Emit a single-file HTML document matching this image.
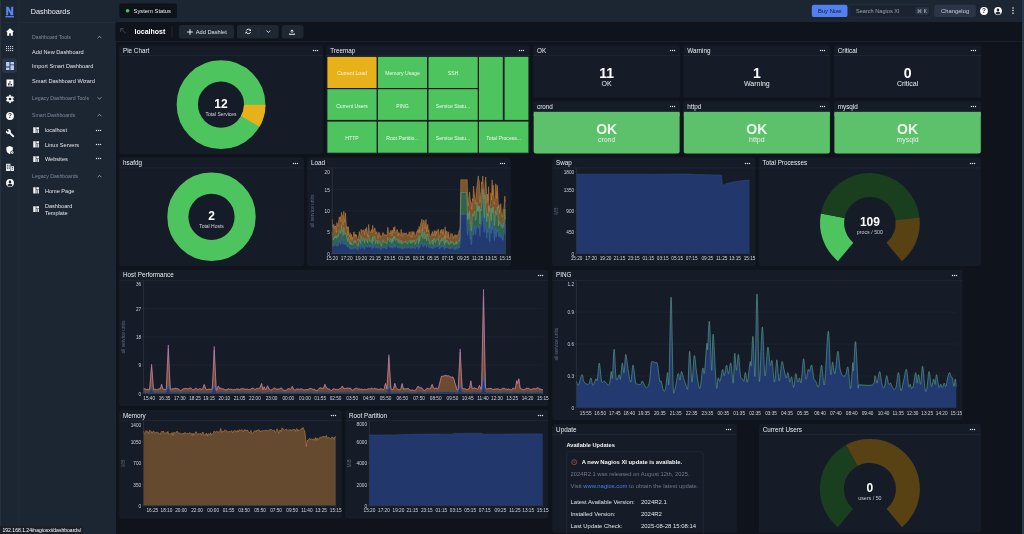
<!DOCTYPE html>
<html lang="en"><head><meta charset="utf-8"><title>Dashboards - Nagios XI</title>
<style>
*{box-sizing:border-box;margin:0;padding:0}
html,body{width:1024px;height:534px;overflow:hidden;background:#0f131b}
body{position:relative;font-family:"Liberation Sans",Arial,sans-serif;color:#e4e7ec;font-size:5.6px;line-height:1}
#app{position:absolute;left:0;top:0;width:1024px;height:534px;will-change:transform}
.abs{position:absolute;display:block}
.tx{position:absolute;display:block;white-space:nowrap;line-height:1}
.panel{position:absolute;overflow:hidden}
.ph{position:absolute;left:0;right:0;top:0;height:11px}
#bg{z-index:0}
svg text{font-family:"Liberation Sans",Arial,sans-serif}
.tk{font-size:4.7px;fill:#cfd4dc}
.ax{font-size:4.8px;fill:#5f6a7c}
</style></head><body><div id="app"><svg id="bg" class="abs" style="left:0;top:0" width="1024" height="534" viewBox="0 0 1024 534"><rect x="0" y="0" width="115.6" height="534" fill="#1c2532"/><rect x="0" y="0" width="1" height="534" fill="#2a313d"/><rect x="18.5" y="0" width="1.1" height="534" fill="#232c3a"/><rect x="114.6" y="0" width="1" height="534" fill="#212a38"/><rect x="115.6" y="0" width="908.4" height="22.4" fill="#1c2532"/><rect x="115.6" y="22.4" width="908.4" height="18.6" fill="#0f131b"/><rect x="115.6" y="40.9" width="908.4" height="0.9" fill="#1c2430"/><rect x="3.8" y="22" width="11" height="0.6" fill="#2a3342"/><rect x="2.1" y="58.3" width="14.8" height="14.6" rx="2.6" fill="#2a3548"/><rect x="5.95" y="45.95" width="1.15" height="1.15" fill="#c2c8d2"/><rect x="5.95" y="47.95" width="1.15" height="1.15" fill="#c2c8d2"/><rect x="5.95" y="49.95" width="1.15" height="1.15" fill="#c2c8d2"/><rect x="7.95" y="45.95" width="1.15" height="1.15" fill="#c2c8d2"/><rect x="7.95" y="47.95" width="1.15" height="1.15" fill="#c2c8d2"/><rect x="7.95" y="49.95" width="1.15" height="1.15" fill="#c2c8d2"/><rect x="9.95" y="45.95" width="1.15" height="1.15" fill="#c2c8d2"/><rect x="9.95" y="47.95" width="1.15" height="1.15" fill="#c2c8d2"/><rect x="9.95" y="49.95" width="1.15" height="1.15" fill="#c2c8d2"/><rect x="11.95" y="45.95" width="1.15" height="1.15" fill="#c2c8d2"/><rect x="11.95" y="47.95" width="1.15" height="1.15" fill="#c2c8d2"/><rect x="11.95" y="49.95" width="1.15" height="1.15" fill="#c2c8d2"/><rect x="20" y="22" width="95.5" height="0.6" fill="#2a3342"/><rect x="119.3" y="3.5" width="57.7" height="14.6" rx="2.2" fill="#0e1219"/><circle cx="127.6" cy="10.8" r="1.800" fill="#4ec45e"/><rect x="811.8" y="4.8" width="35.7" height="12.3" rx="2.2" fill="#5280f0"/><rect x="849.7" y="4.7" width="82.6" height="12.5" rx="2.2" fill="#1c2330" stroke="#2b3445" stroke-width=".6"/><rect x="915.5" y="7.3" width="13.5" height="7.2" rx="1.4" fill="#2a3344"/><rect x="934.3" y="4.8" width="41.6" height="12.3" rx="2.2" fill="#2b3547"/><rect x="171.7" y="25.9" width="0.7" height="11.8" fill="#2a3342"/><rect x="179" y="25" width="55" height="13.4" rx="2.2" fill="#1f2733"/><rect x="237" y="25" width="41.7" height="13.4" rx="2.2" fill="#1f2733"/><rect x="258.3" y="28.8" width="0.6" height="5.8" fill="#2b3443"/><rect x="281.7" y="25" width="21.8" height="13.4" rx="2.2" fill="#1f2733"/><rect x="119.2" y="45.2" width="203.8" height="108.7" rx="2.6" fill="#161c27"/><rect x="119.2" y="55.3" width="203.8" height="0.7" fill="#222a38"/><rect x="326.4" y="45.2" width="203.3" height="108.7" rx="2.6" fill="#161c27"/><rect x="326.4" y="55.3" width="203.3" height="0.7" fill="#222a38"/><rect x="327.4" y="56.9" width="49.2" height="31.1" fill="#e8b11a"/><rect x="378" y="56.9" width="49" height="31.1" fill="#4ec45e"/><rect x="428.5" y="56.9" width="49.2" height="31.1" fill="#4ec45e"/><rect x="479" y="56.9" width="23.8" height="63" fill="#4ec45e"/><rect x="504.6" y="56.9" width="23.8" height="63" fill="#4ec45e"/><rect x="327.4" y="89.2" width="49.2" height="30.7" fill="#4ec45e"/><rect x="378" y="89.2" width="49" height="30.7" fill="#4ec45e"/><rect x="428.5" y="89.2" width="49.2" height="30.7" fill="#4ec45e"/><rect x="327.4" y="121.6" width="49.2" height="31.1" fill="#4ec45e"/><rect x="378" y="121.6" width="49" height="31.1" fill="#4ec45e"/><rect x="428.5" y="121.6" width="49.2" height="31.1" fill="#4ec45e"/><rect x="479" y="121.6" width="49.4" height="31.1" fill="#4ec45e"/><rect x="533.3" y="45.2" width="146.7" height="52.6" rx="2.6" fill="#161c27"/><rect x="533.3" y="55.3" width="146.7" height="0.7" fill="#222a38"/><rect x="683.4" y="45.2" width="146.9" height="52.6" rx="2.6" fill="#161c27"/><rect x="683.4" y="55.3" width="146.9" height="0.7" fill="#222a38"/><rect x="834" y="45.2" width="147.2" height="52.6" rx="2.6" fill="#161c27"/><rect x="834" y="55.3" width="147.2" height="0.7" fill="#222a38"/><rect x="533.3" y="101.2" width="146.7" height="52.7" rx="2.6" fill="#161c27"/><rect x="533.3" y="111.3" width="146.7" height="0.7" fill="#222a38"/><rect x="533.7" y="111.9" width="145.9" height="41.5" rx="2.5" fill="#5dc06a"/><rect x="533.7" y="111.9" width="145.9" height="4.1" fill="#5dc06a"/><rect x="683.4" y="101.2" width="146.9" height="52.7" rx="2.6" fill="#161c27"/><rect x="683.4" y="111.3" width="146.9" height="0.7" fill="#222a38"/><rect x="683.8" y="111.9" width="146.1" height="41.5" rx="2.5" fill="#5dc06a"/><rect x="683.8" y="111.9" width="146.1" height="4.1" fill="#5dc06a"/><rect x="834" y="101.2" width="147.2" height="52.7" rx="2.6" fill="#161c27"/><rect x="834" y="111.3" width="147.2" height="0.7" fill="#222a38"/><rect x="834.4" y="111.9" width="146.4" height="41.5" rx="2.5" fill="#5dc06a"/><rect x="834.4" y="111.9" width="146.4" height="4.1" fill="#5dc06a"/><rect x="119.2" y="157.5" width="184.7" height="108.6" rx="2.6" fill="#161c27"/><rect x="119.2" y="167.6" width="184.7" height="0.7" fill="#222a38"/><rect x="307.2" y="157.5" width="203.6" height="108.6" rx="2.6" fill="#161c27"/><rect x="307.2" y="167.6" width="203.6" height="0.7" fill="#222a38"/><rect x="552.2" y="157.5" width="203.3" height="108.6" rx="2.6" fill="#161c27"/><rect x="552.2" y="167.6" width="203.3" height="0.7" fill="#222a38"/><rect x="758.8" y="157.5" width="222.1" height="108.6" rx="2.6" fill="#161c27"/><rect x="758.8" y="167.6" width="222.1" height="0.7" fill="#222a38"/><rect x="119.2" y="269.8" width="428.9" height="136.1" rx="2.6" fill="#161c27"/><rect x="119.2" y="279.9" width="428.9" height="0.7" fill="#222a38"/><rect x="552.3" y="269.8" width="410.1" height="150.1" rx="2.6" fill="#161c27"/><rect x="552.3" y="279.9" width="410.1" height="0.7" fill="#222a38"/><rect x="119.2" y="410.1" width="222.5" height="108.3" rx="2.6" fill="#161c27"/><rect x="119.2" y="420.2" width="222.5" height="0.7" fill="#222a38"/><rect x="345.1" y="410.1" width="203" height="108.3" rx="2.6" fill="#161c27"/><rect x="345.1" y="420.2" width="203" height="0.7" fill="#222a38"/><rect x="552.3" y="424.1" width="184.4" height="108.4" rx="2.6" fill="#161c27"/><rect x="552.3" y="434.2" width="184.4" height="0.7" fill="#222a38"/><rect x="566.7" y="451.7" width="136.5" height="89.7" rx="2.6" fill="none" stroke="#283040" stroke-width=".6"/><rect x="758.9" y="424.1" width="222" height="108.4" rx="2.6" fill="#161c27"/><rect x="758.9" y="434.2" width="222" height="0.7" fill="#222a38"/><rect x="1022" y="0" width="2" height="534" fill="#2b384c"/></svg>
<nav class="abs" style="left:0;top:0;width:18px;height:534px">
<svg class="abs" style="left:3.6px;top:4.6px" width="11.4" height="13" viewBox="0 0 11.4 13"><text x="5.650" y="9.800" text-anchor="middle" font-size="10.300" font-weight="700" fill="#5b8cf5" stroke="#5b8cf5" stroke-width=".55" textLength="7.900" lengthAdjust="spacingAndGlyphs">N</text><rect x="1.400" y="11.100" width="8.500" height="1.300" fill="#5b8cf5"/></svg>
<svg class="abs" style="left:4.55px;top:27px" width="10" height="10" viewBox="0 0 10 10"><path d="M5 1.200 1 4.800h1.200V8.800h2V6.200h1.600v2.600h2V4.800H9z" fill="#fff"/></svg>
<svg class="abs" style="left:4.55px;top:43.7px" width="10" height="10" viewBox="0 0 10 10"></svg>
<svg class="abs" style="left:4.55px;top:60.6px" width="10" height="10" viewBox="0 0 10 10"><path d="M1.050.9h3.400v4.700H1.050zM5.450.9h3.500v2.500h-3.500zM5.450 4.300h3.500v4.800h-3.500zM1.050 6.500h3.400v2.600H1.050z" fill="#b6cef8"/></svg>
<svg class="abs" style="left:4.55px;top:77.6px" width="10" height="10" viewBox="0 0 10 10"><path d="M1.500 1.500h7v7h-7z" fill="#fff"/><path d="M3.100 5.200h.9v2.200h-.9zM4.550 3h.9v4.400h-.9zM6 6h.9v1.400H6z" fill="#1c2532"/></svg>
<svg class="abs" style="left:4.55px;top:94.3px" width="10" height="10" viewBox="0 0 10 10"><path d="M5.77 8.82L4.23 8.82L4.36 7.83L2.87 6.97L2.08 7.58L1.3 6.24L2.23 5.86L2.23 4.14L1.3 3.76L2.08 2.42L2.87 3.03L4.36 2.17L4.23 1.18L5.77 1.18L5.64 2.17L7.13 3.03L7.92 2.42L8.7 3.76L7.77 4.14L7.77 5.86L8.7 6.24L7.92 7.58L7.13 6.97L5.64 7.83Z" fill="#fff" stroke="#fff" stroke-width=".5" stroke-linejoin="round"/><circle cx="5" cy="5" r="1.350" fill="#1c2532"/></svg>
<svg class="abs" style="left:4.55px;top:111px" width="10" height="10" viewBox="0 0 10 10"><circle cx="5" cy="5" r="3.900" fill="#fff"/><text x="5" y="7.300" text-anchor="middle" font-size="6.400" font-weight="700" fill="#1c2532">?</text></svg>
<svg class="abs" style="left:4.55px;top:127.5px" width="10" height="10" viewBox="0 0 10 10"><path d="M8.900 7.700 5.400 4.200c.4-.9.200-2-.6-2.700-.8-.8-1.900-.9-2.800-.5l1.600 1.600-1.100 1.100L.800 2.100c-.4.900-.2 2 .6 2.800.7.700 1.800.9 2.700.6l3.500 3.500c.2.200.4.200.6 0l.7-.7c.2-.2.200-.5 0-.6z" fill="#fff" transform="translate(.3 .3)"/></svg>
<svg class="abs" style="left:4.55px;top:145.1px" width="10" height="10" viewBox="0 0 10 10"><path d="M4.600 1 1.400 2.300v2.500c0 2 1.400 3.600 3.200 4.200 1.800-.6 3.200-2.200 3.200-4.200V2.300z" fill="#fff"/><circle cx="7.300" cy="7.500" r="1.900" fill="#1c2532"/><circle cx="7.300" cy="7.500" r="1.250" fill="#fff"/><circle cx="7.300" cy="7.500" r=".45" fill="#1c2532"/></svg>
<svg class="abs" style="left:4.55px;top:161.7px" width="10" height="10" viewBox="0 0 10 10"><path d="M1 1.800h4.500v7.200H1zM5.900 4.200h3.100v4.800H5.900z" fill="#e9ecf1"/><path d="M1.900 2.800h.9v.9h-.9zM3.700 2.800h.9v.9h-.9zM1.900 4.500h.9v.9h-.9zM3.700 4.500h.9v.9h-.9zM1.900 6.200h.9v.9h-.9zM3.700 6.200h.9v.9h-.9zM6.900 5.200h1.100v.8H6.900zM6.900 6.800h1.100v.8H6.900z" fill="#1c2532"/></svg>
<svg class="abs" style="left:4.55px;top:178.2px" width="10" height="10" viewBox="0 0 10 10"><circle cx="5" cy="5" r="3.900" fill="#fff"/><circle cx="5" cy="3.900" r="1.350" fill="#1c2532"/><path d="M2.400 7.200c.5-1 1.500-1.500 2.600-1.500s2.100.5 2.600 1.500c-.7.800-1.600 1.200-2.600 1.200s-1.900-.4-2.600-1.200z" fill="#1c2532"/></svg>
</nav>
<aside class="abs" style="left:18.5px;top:0;width:97px;height:534px">
<h1 class="tx" style="font-weight:400;top:8px;font-size:7.3px;left:12.2px;color:#eef0f4">Dashboards</h1>
<div class="tx" style="top:35px;font-size:5.2px;left:13.5px;color:#7f8a9e">Dashboard Tools</div><svg class="abs" style="left:78.4px;top:35.1px" width="5" height="4.6" viewBox="0 0 5 4.6"><path d="M.6 3.200 2.500 1.300 4.400 3.200" fill="none" stroke="#aab3c2" stroke-width=".8"/></svg>
<div class="tx" style="top:50px;font-size:5.6px;left:13.5px;color:#e2e5ea">Add New Dashboard</div>
<div class="tx" style="top:64px;font-size:5.6px;left:13.5px;color:#e2e5ea">Import Smart Dashboard</div>
<div class="tx" style="top:79px;font-size:5.6px;left:13.5px;color:#e2e5ea">Smart Dashboard Wizard</div>
<div class="tx" style="top:96px;font-size:5.2px;left:13.5px;color:#7f8a9e">Legacy Dashboard Tools</div><svg class="abs" style="left:78.4px;top:95.7px" width="5" height="4.6" viewBox="0 0 5 4.6"><path d="M.6 1.300 2.500 3.200 4.400 1.300" fill="none" stroke="#aab3c2" stroke-width=".8"/></svg>
<div class="tx" style="top:113px;font-size:5.2px;left:13.5px;color:#7f8a9e">Smart Dashboards</div><svg class="abs" style="left:78.4px;top:113.2px" width="5" height="4.6" viewBox="0 0 5 4.6"><path d="M.6 3.200 2.500 1.300 4.400 3.200" fill="none" stroke="#aab3c2" stroke-width=".8"/></svg>
<svg class="abs" style="left:14.4px;top:126.7px" width="6.6" height="6.6" viewBox="0 0 6.6 6.6"><path d="M.2.2h2.500v6.200H.2zM3.300.2h3.100v2.300H3.300zM3.300 3.100h1.200v3.300H3.300zM5.100 3.100h1.300v3.300H5.100z" fill="#eef0f4"/></svg><div class="tx" style="top:128px;font-size:5.6px;left:26.4px;color:#e2e5ea">localhost</div><svg class="abs" style="left:76.5px;top:128.5px" width="7" height="3" viewBox="0 0 7 3"><circle cx="1.5" cy="1.5" r="0.7" fill="#e2e5ea"/><circle cx="3.5" cy="1.5" r="0.7" fill="#e2e5ea"/><circle cx="5.5" cy="1.5" r="0.7" fill="#e2e5ea"/></svg>
<svg class="abs" style="left:14.4px;top:141.2px" width="6.6" height="6.6" viewBox="0 0 6.6 6.6"><path d="M.2.2h2.500v6.200H.2zM3.300.2h3.100v2.300H3.300zM3.300 3.100h1.200v3.300H3.300zM5.100 3.100h1.300v3.300H5.100z" fill="#eef0f4"/></svg><div class="tx" style="top:143px;font-size:5.6px;left:26.4px;color:#e2e5ea">Linux Servers</div><svg class="abs" style="left:76.5px;top:143px" width="7" height="3" viewBox="0 0 7 3"><circle cx="1.5" cy="1.5" r="0.7" fill="#e2e5ea"/><circle cx="3.5" cy="1.5" r="0.7" fill="#e2e5ea"/><circle cx="5.5" cy="1.5" r="0.7" fill="#e2e5ea"/></svg>
<svg class="abs" style="left:14.4px;top:155.6px" width="6.6" height="6.6" viewBox="0 0 6.6 6.6"><path d="M.2.2h2.500v6.200H.2zM3.300.2h3.100v2.300H3.300zM3.300 3.100h1.200v3.300H3.300zM5.100 3.100h1.300v3.300H5.100z" fill="#eef0f4"/></svg><div class="tx" style="top:157px;font-size:5.6px;left:26.4px;color:#e2e5ea">Websites</div><svg class="abs" style="left:76.5px;top:157.4px" width="7" height="3" viewBox="0 0 7 3"><circle cx="1.5" cy="1.5" r="0.7" fill="#e2e5ea"/><circle cx="3.5" cy="1.5" r="0.7" fill="#e2e5ea"/><circle cx="5.5" cy="1.5" r="0.7" fill="#e2e5ea"/></svg>
<div class="tx" style="top:174px;font-size:5.2px;left:13.5px;color:#7f8a9e">Legacy Dashboards</div><svg class="abs" style="left:78.4px;top:173.8px" width="5" height="4.6" viewBox="0 0 5 4.6"><path d="M.6 3.200 2.500 1.300 4.400 3.200" fill="none" stroke="#aab3c2" stroke-width=".8"/></svg>
<svg class="abs" style="left:14.4px;top:187.4px" width="6.6" height="6.6" viewBox="0 0 6.6 6.6"><path d="M.2.2h2.500v6.200H.2zM3.300.2h3.100v2.300H3.300zM3.300 3.100h1.200v3.300H3.300zM5.100 3.100h1.300v3.300H5.100z" fill="#eef0f4"/></svg><div class="tx" style="top:189px;font-size:5.6px;left:26.4px;color:#e2e5ea">Home Page</div>
<svg class="abs" style="left:14.4px;top:205.6px" width="6.6" height="6.6" viewBox="0 0 6.6 6.6"><path d="M.2.2h2.500v6.200H.2zM3.300.2h3.100v2.300H3.300zM3.300 3.100h1.200v3.300H3.300zM5.100 3.100h1.300v3.300H5.100z" fill="#eef0f4"/></svg><div class="tx" style="top:204px;font-size:5.6px;left:26.4px;color:#e2e5ea">Dashboard</div><div class="tx" style="top:211px;font-size:5.6px;left:26.4px;color:#e2e5ea">Template</div>
</aside>
<header class="abs" style="left:115.5px;top:0;width:908.5px;height:22.3px">
<div class="tx" style="top:9px;font-size:5.8px;left:18.1px;color:#e9ecf1">System Status</div>
<div class="tx" style="top:9px;font-size:5.8px;left:614.15px;width:200px;text-align:center;color:#141a26">Buy Now</div>
<div class="tx" style="top:9px;font-size:5.6px;left:740.5px;color:#9aa3b2">Search Nagios XI</div>
<div class="tx" style="top:10px;font-size:4.8px;left:706.75px;width:200px;text-align:center;color:#c3c9d3">&#8984; K</div>
<div class="tx" style="top:9px;font-size:5.8px;left:739.6px;width:200px;text-align:center;color:#c8d0dc">Changelog</div>
<svg class="abs" style="left:863.5px;top:5.9px" width="10" height="10" viewBox="0 0 10 10"><circle cx="5" cy="5" r="3.900" fill="#fff"/><text x="5" y="7.300" text-anchor="middle" font-size="6.400" font-weight="700" fill="#1c2532">?</text></svg>
<svg class="abs" style="left:877.7px;top:5.9px" width="10" height="10" viewBox="0 0 10 10"><circle cx="5" cy="5" r="3.900" fill="#fff"/><circle cx="5" cy="3.900" r="1.350" fill="#1c2532"/><path d="M2.400 7.200c.5-1 1.500-1.500 2.600-1.500s2.100.5 2.600 1.500c-.7.800-1.600 1.200-2.600 1.200s-1.900-.4-2.600-1.200z" fill="#1c2532"/></svg>
<svg class="abs" style="left:896.1px;top:7.3px" width="2" height="7.2" viewBox="0 0 2 7.2"><circle cx="1" cy="1" r=".78" fill="#fff"/><circle cx="1" cy="3.600" r=".78" fill="#fff"/><circle cx="1" cy="6.200" r=".78" fill="#fff"/></svg>
</header>
<div class="abs" style="left:115.5px;top:22.3px;width:908.5px;height:19px">
<svg class="abs" style="left:4.5px;top:5.7px" width="6.6" height="6.2" viewBox="0 0 6.6 6.2"><path d="M.6 3.800V.6h3.200M.8.800l5.200 4.800" fill="none" stroke="#3f4b5f" stroke-width=".9"/></svg>
<div class="tx" style="top:5.7px;font-size:7px;left:19.1px;font-weight:700;color:#fff">localhost</div>
<svg class="abs" style="left:71.8px;top:6.5px" width="6" height="6" viewBox="0 0 6 6"><path d="M3 .2v5.600M.2 3h5.600" stroke="#eef0f4" stroke-width=".95"/></svg>
<div class="tx" style="top:7.7px;font-size:5.7px;left:80.3px;color:#dfe3e9">Add Dashlet</div>
<svg class="abs" style="left:129.2px;top:6.05px" width="6.8" height="6.8" viewBox="0 0 6.8 6.8"><path d="M1.250 2.600A2.300 2.300 0 0 1 5.300 2.100M5.550 4.200A2.300 2.300 0 0 1 1.500 4.700" fill="none" stroke="#eef0f4" stroke-width=".95"/><path d="M6.300.7v2.300H4zM.5 6.100V3.800h2.300z" fill="#eef0f4"/></svg>
<svg class="abs" style="left:150.6px;top:8px" width="4.8" height="3.2" viewBox="0 0 4.8 3.2"><path d="M.5.600l1.900 1.800L4.300.6" fill="none" stroke="#eef0f4" stroke-width=".85"/></svg>
<svg class="abs" style="left:173.9px;top:6.3px" width="6" height="6.4" viewBox="0 0 6 6.4"><path d="M3 4.300V1M1.500 2.400 3 .9l1.500 1.500" fill="none" stroke="#eef0f4" stroke-width=".9"/><path d="M.3 4.300h1v1h3.400v-1h1v2H.3z" fill="#eef0f4"/></svg>
</div>
<section class="panel" style="left:119px;top:45px;width:204px;height:109px"><header class="ph"><h2 class="tx" style="font-weight:400;top:3px;font-size:6.3px;left:4px;color:#e9ecf1">Pie Chart</h2><svg class="abs" style="left:192.5px;top:4.2px" width="7" height="3" viewBox="0 0 7 3"><circle cx="1.5" cy="1.5" r="0.7" fill="#e6e9ee"/><circle cx="3.5" cy="1.5" r="0.7" fill="#e6e9ee"/><circle cx="5.5" cy="1.5" r="0.7" fill="#e6e9ee"/></svg></header>
<svg class="abs" style="left:0px;top:0px" width="205" height="110" viewBox="119 45 205 110"><circle cx="221.0" cy="104.6" r="33.7" fill="none" stroke="#4ec45e" stroke-width="21.3"/><path d="M265.5 104.83A44.5 44.5 0 0 1 259.54 126.85L240.92 116.1A23 23 0 0 0 244 104.72Z" fill="#e8b11a"/><text x="221.0" y="108" text-anchor="middle" font-size="12" font-weight="700" fill="#fff">12</text><text x="221.0" y="116" text-anchor="middle" font-size="5" fill="#d0d4db">Total Services</text></svg>
</section>
<section class="panel" style="left:326px;top:45px;width:204px;height:109px"><header class="ph"><h2 class="tx" style="font-weight:400;top:3px;font-size:6.3px;left:4.2px;color:#e9ecf1">Treemap</h2><svg class="abs" style="left:192.2px;top:4.2px" width="7" height="3" viewBox="0 0 7 3"><circle cx="1.5" cy="1.5" r="0.7" fill="#e6e9ee"/><circle cx="3.5" cy="1.5" r="0.7" fill="#e6e9ee"/><circle cx="5.5" cy="1.5" r="0.7" fill="#e6e9ee"/></svg></header>
<div class="tx" style="top:26px;font-size:5.1px;left:-74px;width:200px;text-align:center;color:rgba(255,255,255,.9)">Current Load</div>
<div class="tx" style="top:26px;font-size:5.1px;left:-23.5px;width:200px;text-align:center;color:rgba(255,255,255,.9)">Memory Usage</div>
<div class="tx" style="top:26px;font-size:5.1px;left:27.1px;width:200px;text-align:center;color:rgba(255,255,255,.9)">SSH</div>
<div class="tx" style="top:59px;font-size:5.1px;left:-74px;width:200px;text-align:center;color:rgba(255,255,255,.9)">Current Users</div>
<div class="tx" style="top:59px;font-size:5.1px;left:-23.5px;width:200px;text-align:center;color:rgba(255,255,255,.9)">PING</div>
<div class="tx" style="top:59px;font-size:5.1px;left:27.1px;width:200px;text-align:center;color:rgba(255,255,255,.9)">Service Statu...</div>
<div class="tx" style="top:91px;font-size:5.1px;left:-74px;width:200px;text-align:center;color:rgba(255,255,255,.9)">HTTP</div>
<div class="tx" style="top:91px;font-size:5.1px;left:-23.5px;width:200px;text-align:center;color:rgba(255,255,255,.9)">Root Partitio...</div>
<div class="tx" style="top:91px;font-size:5.1px;left:27.1px;width:200px;text-align:center;color:rgba(255,255,255,.9)">Service Statu...</div>
<div class="tx" style="top:91px;font-size:5.1px;left:77.7px;width:200px;text-align:center;color:rgba(255,255,255,.9)">Total Process...</div>
</section>
<section class="panel" style="left:533px;top:45px;width:147px;height:53px"><header class="ph"><h2 class="tx" style="font-weight:400;top:3px;font-size:6.3px;left:4.1px;color:#e9ecf1">OK</h2><svg class="abs" style="left:135.5px;top:4.2px" width="7" height="3" viewBox="0 0 7 3"><circle cx="1.5" cy="1.5" r="0.7" fill="#e6e9ee"/><circle cx="3.5" cy="1.5" r="0.7" fill="#e6e9ee"/><circle cx="5.5" cy="1.5" r="0.7" fill="#e6e9ee"/></svg></header>
<div class="tx" style="top:21px;font-size:14px;left:-26.35px;width:200px;text-align:center;font-weight:700;color:#fff">11</div>
<div class="tx" style="top:35px;font-size:7px;left:-26.35px;width:200px;text-align:center;color:#e9ecf1">OK</div>
</section>
<section class="panel" style="left:683px;top:45px;width:148px;height:53px"><header class="ph"><h2 class="tx" style="font-weight:400;top:3px;font-size:6.3px;left:4.2px;color:#e9ecf1">Warning</h2><svg class="abs" style="left:135.8px;top:4.2px" width="7" height="3" viewBox="0 0 7 3"><circle cx="1.5" cy="1.5" r="0.7" fill="#e6e9ee"/><circle cx="3.5" cy="1.5" r="0.7" fill="#e6e9ee"/><circle cx="5.5" cy="1.5" r="0.7" fill="#e6e9ee"/></svg></header>
<div class="tx" style="top:21px;font-size:14px;left:-26.15px;width:200px;text-align:center;font-weight:700;color:#fff">1</div>
<div class="tx" style="top:35px;font-size:7px;left:-26.15px;width:200px;text-align:center;color:#e9ecf1">Warning</div>
</section>
<section class="panel" style="left:834px;top:45px;width:148px;height:53px"><header class="ph"><h2 class="tx" style="font-weight:400;top:3px;font-size:6.3px;left:3.8px;color:#e9ecf1">Critical</h2><svg class="abs" style="left:135.7px;top:4.2px" width="7" height="3" viewBox="0 0 7 3"><circle cx="1.5" cy="1.5" r="0.7" fill="#e6e9ee"/><circle cx="3.5" cy="1.5" r="0.7" fill="#e6e9ee"/><circle cx="5.5" cy="1.5" r="0.7" fill="#e6e9ee"/></svg></header>
<div class="tx" style="top:21px;font-size:14px;left:-26.4px;width:200px;text-align:center;font-weight:700;color:#fff">0</div>
<div class="tx" style="top:35px;font-size:7px;left:-26.4px;width:200px;text-align:center;color:#e9ecf1">Critical</div>
</section>
<section class="panel" style="left:533px;top:101px;width:147px;height:53px"><header class="ph"><h2 class="tx" style="font-weight:400;top:3px;font-size:6.3px;left:4.1px;color:#e9ecf1">crond</h2><svg class="abs" style="left:135.5px;top:4.2px" width="7" height="3" viewBox="0 0 7 3"><circle cx="1.5" cy="1.5" r="0.7" fill="#e6e9ee"/><circle cx="3.5" cy="1.5" r="0.7" fill="#e6e9ee"/><circle cx="5.5" cy="1.5" r="0.7" fill="#e6e9ee"/></svg></header>
<div class="tx" style="top:21px;font-size:14px;left:-26.35px;width:200px;text-align:center;font-weight:700;color:#eaf6ec">OK</div>
<div class="tx" style="top:35px;font-size:7px;left:-26.35px;width:200px;text-align:center;color:#e3f3e6">crond</div>
</section>
<section class="panel" style="left:683px;top:101px;width:148px;height:53px"><header class="ph"><h2 class="tx" style="font-weight:400;top:3px;font-size:6.3px;left:4.2px;color:#e9ecf1">httpd</h2><svg class="abs" style="left:135.8px;top:4.2px" width="7" height="3" viewBox="0 0 7 3"><circle cx="1.5" cy="1.5" r="0.7" fill="#e6e9ee"/><circle cx="3.5" cy="1.5" r="0.7" fill="#e6e9ee"/><circle cx="5.5" cy="1.5" r="0.7" fill="#e6e9ee"/></svg></header>
<div class="tx" style="top:21px;font-size:14px;left:-26.15px;width:200px;text-align:center;font-weight:700;color:#eaf6ec">OK</div>
<div class="tx" style="top:35px;font-size:7px;left:-26.15px;width:200px;text-align:center;color:#e3f3e6">httpd</div>
</section>
<section class="panel" style="left:834px;top:101px;width:148px;height:53px"><header class="ph"><h2 class="tx" style="font-weight:400;top:3px;font-size:6.3px;left:3.8px;color:#e9ecf1">mysqld</h2><svg class="abs" style="left:135.7px;top:4.2px" width="7" height="3" viewBox="0 0 7 3"><circle cx="1.5" cy="1.5" r="0.7" fill="#e6e9ee"/><circle cx="3.5" cy="1.5" r="0.7" fill="#e6e9ee"/><circle cx="5.5" cy="1.5" r="0.7" fill="#e6e9ee"/></svg></header>
<div class="tx" style="top:21px;font-size:14px;left:-26.4px;width:200px;text-align:center;font-weight:700;color:#eaf6ec">OK</div>
<div class="tx" style="top:35px;font-size:7px;left:-26.4px;width:200px;text-align:center;color:#e3f3e6">mysqld</div>
</section>
<section class="panel" style="left:119px;top:157px;width:185px;height:110px"><header class="ph"><h2 class="tx" style="font-weight:400;top:3px;font-size:6.3px;left:4px;color:#e9ecf1">hsafdg</h2><svg class="abs" style="left:173.4px;top:4.5px" width="7" height="3" viewBox="0 0 7 3"><circle cx="1.5" cy="1.5" r="0.7" fill="#e6e9ee"/><circle cx="3.5" cy="1.5" r="0.7" fill="#e6e9ee"/><circle cx="5.5" cy="1.5" r="0.7" fill="#e6e9ee"/></svg></header>
<svg class="abs" style="left:0px;top:1px" width="186" height="108" viewBox="119 158 186 108"><circle cx="211.5" cy="216.8" r="33.65" fill="none" stroke="#4ec45e" stroke-width="21.1"/><text x="211.5" y="220" text-anchor="middle" font-size="12" font-weight="700" fill="#fff">2</text><text x="211.5" y="228" text-anchor="middle" font-size="5" fill="#d0d4db">Total Hosts</text></svg>
</section>
<section class="panel" style="left:307px;top:157px;width:204px;height:110px"><header class="ph"><h2 class="tx" style="font-weight:400;top:3px;font-size:6.3px;left:4px;color:#e9ecf1">Load</h2><svg class="abs" style="left:192.3px;top:4.5px" width="7" height="3" viewBox="0 0 7 3"><circle cx="1.5" cy="1.5" r="0.7" fill="#e6e9ee"/><circle cx="3.5" cy="1.5" r="0.7" fill="#e6e9ee"/><circle cx="5.5" cy="1.5" r="0.7" fill="#e6e9ee"/></svg></header><svg class="abs" style="left:0px;top:0px" width="204" height="110" viewBox="307 157 204 110"><path d="M332.2 232.25H505.4" stroke="#222a37" stroke-width=".5"/><path d="M332.2 210.9H505.4" stroke="#222a37" stroke-width=".5"/><path d="M332.2 189.55H505.4" stroke="#222a37" stroke-width=".5"/><path d="M332.2 219.2L332.8 227.2L333.4 225.5L333.9 224.2L334.5 228.7L335.1 225.9L335.7 226L336.3 232.4L336.8 222.6L337.4 224.1L338 226.3L338.6 222.3L339.2 217.1L339.7 218.3L340.3 216.6L340.9 221.8L341.5 212.4L342 215.5L342.6 215.6L343.2 224.9L343.8 211.1L344.4 218.8L344.9 222.1L345.5 212.9L346.1 222.5L346.7 229L347.3 226.6L347.8 235.3L348.4 226.8L349 233.8L349.6 237L350.2 232.8L350.7 239.3L351.3 234.2L351.9 240.4L352.5 237.2L353.1 238.5L353.6 232.4L354.2 231.7L354.8 236.6L355.4 234L355.9 236.4L356.5 234.8L357.1 237.9L357.7 240.1L358.3 240.4L358.8 235.5L359.4 231.5L360 235.7L360.6 236.4L361.2 229.2L361.7 232.3L362.3 231.5L362.9 229.9L363.5 230.1L364.1 230.9L364.6 234.5L365.2 228.9L365.8 230.9L366.4 227.3L367 232L367.5 236.2L368.1 230.4L368.7 224.4L369.3 230.5L369.9 231.7L370.4 232.4L371 231.6L371.6 229.5L372.2 232.9L372.7 225.2L373.3 231.4L373.9 230.9L374.5 227.8L375.1 228.5L375.6 233.7L376.2 232.5L376.8 231.7L377.4 234.3L378 238.6L378.5 232.7L379.1 232.3L379.7 233.7L380.3 237.2L380.9 235.7L381.4 236.8L382 236.4L382.6 232.9L383.2 232.7L383.8 234.9L384.3 235.1L384.9 234.3L385.5 235.3L386.1 235L386.7 236L387.2 233.9L387.8 227.2L388.4 230.3L389 233.1L389.5 233.1L390.1 234.2L390.7 230.6L391.3 230.5L391.9 235.7L392.4 230.2L393 233.2L393.6 227.4L394.2 231L394.8 226.5L395.3 233L395.9 232.7L396.5 231.3L397.1 229.4L397.7 231L398.2 236.1L398.8 232.5L399.4 233.1L400 234.5L400.6 235.3L401.1 229.3L401.7 235L402.3 236.3L402.9 232.7L403.4 234.1L404 234.8L404.6 232.8L405.2 233.7L405.8 234.1L406.3 232.8L406.9 234.3L407.5 235.9L408.1 234.6L408.7 234.4L409.2 231.8L409.8 234.8L410.4 236.8L411 231.5L411.6 235.7L412.1 237.6L412.7 231.4L413.3 234.6L413.9 231.6L414.5 234.6L415 236.4L415.6 236.3L416.2 233.3L416.8 231.5L417.4 232.1L417.9 229.3L418.5 232.5L419.1 226.5L419.7 232.7L420.2 226.8L420.8 223.4L421.4 221.7L422 219.1L422.6 230.9L423.1 222.1L423.7 220.1L424.3 221.1L424.9 228.6L425.5 224.2L426 219.4L426.6 231.8L427.2 225.3L427.8 224.4L428.4 231.9L428.9 229.8L429.5 236L430.1 236.8L430.7 236.6L431.3 233.8L431.8 234.3L432.4 231.4L433 236L433.6 233.7L434.2 230.5L434.7 231.3L435.3 236.2L435.9 230.5L436.5 233.6L437 231.2L437.6 231.4L438.2 228.9L438.8 231.9L439.4 237.4L439.9 236.1L440.5 230.2L441.1 233L441.7 229.1L442.3 231.5L442.8 234.3L443.4 229.2L444 234.5L444.6 237.9L445.2 226.8L445.7 238L446.3 231.4L446.9 231L447.5 233.4L448.1 238.4L448.6 231.9L449.2 238.3L449.8 238.4L450.4 236.1L450.9 233.5L451.5 234.7L452.1 233.6L452.7 236.6L453.3 236L453.8 238.4L454.4 236.5L455 234.5L455.6 236.6L456.2 234.9L456.7 237.4L457.3 236.7L457.9 234.2L458.5 233.8L459.1 230.5L459.6 230.7L460.2 225.5L460.8 179.7L461.4 179.7L462 179.7L462.5 179.7L463.1 179.7L463.7 179.7L464.3 179.7L464.9 179.7L465.4 179.7L466 179.7L466.6 179.7L467.2 179.6L467.7 202.6L468.3 205.6L468.9 197.6L469.5 191.9L470.1 198.5L470.6 202.4L471.2 202.2L471.8 209.3L472.4 198.6L473 200.6L473.5 186.1L474.1 191.7L474.7 198L475.3 204.3L475.9 197.4L476.4 191.7L477 186L477.6 181.6L478.2 175.9L478.8 179.9L479.3 181.1L479.9 202.4L480.5 194.9L481.1 191.4L481.7 181.9L482.2 184L482.8 175.9L483.4 188.5L484 198.7L484.5 194L485.1 182.7L485.7 177L486.3 187.4L486.9 203.3L487.4 194L488 200.6L488.6 186.7L489.2 211.5L489.8 205.2L490.3 205.1L490.9 192.8L491.5 200L492.1 179.9L492.7 195.3L493.2 185.2L493.8 200.5L494.4 204.3L495 197.4L495.6 183.8L496.1 184.5L496.7 198.5L497.3 185.3L497.9 194.9L498.4 208.2L499 204.8L499.6 213.3L500.2 204.2L500.8 203.7L501.3 212.9L501.9 214.8L502.5 216.8L503.1 209.4L503.7 208.7L504.2 205.9L504.8 196.1L505.4 201.9V253.6H332.2Z" fill="#7a5530"/><path d="M332.2 232.2L332.8 238.8L333.4 240L333.9 237.3L334.5 237.1L335.1 238L335.7 235.7L336.3 238.5L336.8 236.4L337.4 235.5L338 237.4L338.6 234.7L339.2 229.8L339.7 230.4L340.3 233.5L340.9 234.2L341.5 224.8L342 231.4L342.6 230.6L343.2 235.6L343.8 226.8L344.4 231.2L344.9 234.6L345.5 232.6L346.1 233.3L346.7 238.1L347.3 239.5L347.8 241.4L348.4 237.7L349 240.7L349.6 243.8L350.2 240.8L350.7 244.6L351.3 242.8L351.9 245.1L352.5 245.1L353.1 244.5L353.6 242.8L354.2 240.5L354.8 242.7L355.4 240.2L355.9 243.3L356.5 243.8L357.1 244.9L357.7 246.2L358.3 245.5L358.8 242.1L359.4 239.5L360 241.2L360.6 243.7L361.2 236.3L361.7 238L362.3 240.7L362.9 241L363.5 238L364.1 239.6L364.6 243.1L365.2 239L365.8 238.3L366.4 240.4L367 240.8L367.5 243L368.1 238.5L368.7 235.2L369.3 240.3L369.9 241.9L370.4 240.3L371 239.6L371.6 240L372.2 243.8L372.7 236.8L373.3 241.2L373.9 239.4L374.5 236.1L375.1 238.4L375.6 243.6L376.2 241.8L376.8 240.1L377.4 241.8L378 243.9L378.5 240.6L379.1 241.4L379.7 241L380.3 244L380.9 245.1L381.4 246.1L382 243.2L382.6 240.7L383.2 239.7L383.8 242.7L384.3 242.7L384.9 241.6L385.5 242.5L386.1 243.2L386.7 244L387.2 241.5L387.8 237.2L388.4 240.3L389 239.7L389.5 240.7L390.1 242L390.7 238.5L391.3 239.8L391.9 243.5L392.4 238.3L393 241.9L393.6 236.6L394.2 239.2L394.8 236.2L395.3 240.4L395.9 240.5L396.5 239.6L397.1 238.5L397.7 239.3L398.2 242.6L398.8 239.4L399.4 241.7L400 243.3L400.6 242.3L401.1 240L401.7 244L402.3 244.2L402.9 242.1L403.4 242.2L404 242.3L404.6 242.1L405.2 242.8L405.8 240.8L406.3 241.5L406.9 242.9L407.5 244.1L408.1 242.8L408.7 241.4L409.2 240.5L409.8 241.1L410.4 243.3L411 240.2L411.6 242.8L412.1 243.2L412.7 240.3L413.3 242.1L413.9 240.8L414.5 239.8L415 244.2L415.6 244.1L416.2 241.9L416.8 239.1L417.4 238.5L417.9 238.2L418.5 243.9L419.1 235.6L419.7 241.5L420.2 237.6L420.8 237.1L421.4 236L422 229.8L422.6 238.4L423.1 238.3L423.7 234.2L424.3 231.6L424.9 238.9L425.5 235.3L426 234.1L426.6 240.9L427.2 236.5L427.8 233.9L428.4 239.1L428.9 239.9L429.5 243.4L430.1 244.3L430.7 242.8L431.3 241.6L431.8 242.3L432.4 239.9L433 244.6L433.6 240.3L434.2 238.3L434.7 241L435.3 242.6L435.9 239.6L436.5 240.5L437 239.9L437.6 239.3L438.2 238L438.8 241.3L439.4 245L439.9 243.3L440.5 240.3L441.1 241.6L441.7 238.1L442.3 240.6L442.8 240.6L443.4 237.6L444 242.6L444.6 245.1L445.2 237L445.7 243L446.3 240.2L446.9 241.2L447.5 240.5L448.1 243.4L448.6 242.3L449.2 244.8L449.8 244.2L450.4 243.4L450.9 240.9L451.5 243.3L452.1 241.8L452.7 242.5L453.3 242.6L453.8 244.9L454.4 244.4L455 243.2L455.6 244.2L456.2 240.9L456.7 244.3L457.3 243.5L457.9 242.1L458.5 241.7L459.1 239.9L459.6 240.9L460.2 235.9L460.8 192.5L461.4 192.5L462 192.5L462.5 192.5L463.1 192.5L463.7 192.5L464.3 192.5L464.9 192.5L465.4 192.5L466 192.5L466.6 192.5L467.2 208.9L467.7 219.9L468.3 213L468.9 218.6L469.5 211.3L470.1 223.3L470.6 222.8L471.2 231.3L471.8 229L472.4 213.9L473 215.4L473.5 216.4L474.1 212.8L474.7 211.1L475.3 220.4L475.9 219.6L476.4 215.3L477 202.4L477.6 211.2L478.2 205.9L478.8 211.5L479.3 206.2L479.9 224.1L480.5 209.2L481.1 210.8L481.7 204.6L482.2 196.4L482.8 188.8L483.4 202.9L484 215.7L484.5 217.9L485.1 195.1L485.7 205.5L486.3 214.9L486.9 221.7L487.4 213.5L488 216.3L488.6 205.9L489.2 227.5L489.8 227.5L490.3 219.7L490.9 208.2L491.5 220.6L492.1 208.1L492.7 212.9L493.2 206.8L493.8 216.5L494.4 225.6L495 218.9L495.6 210.7L496.1 214.9L496.7 214.8L497.3 206.9L497.9 211.8L498.4 226L499 221.1L499.6 223.2L500.2 224.3L500.8 223.8L501.3 226.2L501.9 225.3L502.5 228.2L503.1 226.9L503.7 223.2L504.2 222.9L504.8 209L505.4 219.6V253.6H332.2Z" fill="#2f6350"/><path d="M332.2 242.5L332.8 245.6L333.4 246.5L333.9 244.2L334.5 245L335.1 245.2L335.7 245.1L336.3 245.9L336.8 245.4L337.4 246.1L338 245.8L338.6 245.3L339.2 240.5L339.7 242.3L340.3 243.3L340.9 244.5L341.5 236.5L342 242.6L342.6 242.9L343.2 244.4L343.8 239.4L344.4 242.5L344.9 244.9L345.5 242.7L346.1 243.3L346.7 246L347.3 246.9L347.8 247.1L348.4 244.5L349 247.6L349.6 248.6L350.2 247L350.7 249.5L351.3 248.6L351.9 249.3L352.5 249.4L353.1 248.7L353.6 248.2L354.2 246.9L354.8 248.4L355.4 246.2L355.9 249L356.5 248.8L357.1 249.1L357.7 250L358.3 249.8L358.8 247.7L359.4 246.1L360 247L360.6 248.8L361.2 243.6L361.7 245.4L362.3 246.9L362.9 248.3L363.5 246.4L364.1 246.5L364.6 249.3L365.2 245.9L365.8 246.7L366.4 246.2L367 246.4L367.5 247.6L368.1 246.8L368.7 244.3L369.3 247L369.9 247.5L370.4 247L371 246.3L371.6 246.6L372.2 248.9L372.7 244.2L373.3 248L373.9 246.5L374.5 243.9L375.1 245.8L375.6 248.3L376.2 248.2L376.8 245.9L377.4 247.6L378 248.6L378.5 246.4L379.1 247L379.7 247.7L380.3 249.1L380.9 250.1L381.4 249.4L382 248.3L382.6 247.3L383.2 246.8L383.8 247.9L384.3 247.8L384.9 247L385.5 248.5L386.1 248L386.7 249.2L387.2 246.8L387.8 245.4L388.4 246L389 246.1L389.5 246.4L390.1 247.6L390.7 245.8L391.3 247.7L391.9 247.8L392.4 246.2L393 248.5L393.6 244.2L394.2 247.2L394.8 244.5L395.3 247.5L395.9 246.4L396.5 245.6L397.1 246.8L397.7 247.9L398.2 248.3L398.8 246.4L399.4 247.5L400 248.1L400.6 247.6L401.1 248.6L401.7 248.3L402.3 249.1L402.9 246.9L403.4 248.1L404 248.5L404.6 247.4L405.2 248.5L405.8 247.6L406.3 247.7L406.9 247.9L407.5 248.6L408.1 247.1L408.7 247.7L409.2 246.4L409.8 247.4L410.4 248.9L411 246.3L411.6 247.8L412.1 248.5L412.7 247.1L413.3 248L413.9 246.1L414.5 246.2L415 248.8L415.6 247.9L416.2 247.6L416.8 246.1L417.4 246.6L417.9 245.1L418.5 249.3L419.1 245.8L419.7 247.9L420.2 245.4L420.8 245L421.4 244.5L422 242L422.6 245L423.1 247.1L423.7 243.6L424.3 243.2L424.9 245.9L425.5 244.8L426 244.7L426.6 247.6L427.2 244.1L427.8 243.4L428.4 246.8L428.9 247L429.5 248.1L430.1 248.5L430.7 248L431.3 247.4L431.8 248.1L432.4 246.5L433 248.9L433.6 246.8L434.2 245.4L434.7 247.7L435.3 247.9L435.9 247.3L436.5 246.6L437 245.9L437.6 246.9L438.2 245L438.8 247.2L439.4 249L439.9 248.5L440.5 246.5L441.1 247.5L441.7 245.9L442.3 247.3L442.8 247.1L443.4 245.1L444 248L444.6 249.6L445.2 244.6L445.7 248.1L446.3 246.9L446.9 247.7L447.5 247.1L448.1 248L448.6 248.4L449.2 248.6L449.8 249.1L450.4 248.7L450.9 247L451.5 248.7L452.1 247.2L452.7 247.5L453.3 248L453.8 249.4L454.4 249.4L455 248.6L455.6 249.5L456.2 246.7L456.7 248.7L457.3 249L457.9 248.5L458.5 248.2L459.1 246.7L459.6 247.6L460.2 243.1L460.8 214.7L461.4 214.7L462 214.7L462.5 214.7L463.1 214.7L463.7 214.7L464.3 214.7L464.9 214.7L465.4 214.7L466 214.7L466.6 214.7L467.2 232.1L467.7 235.3L468.3 229.6L468.9 228.2L469.5 229.3L470.1 239L470.6 237.9L471.2 244.8L471.8 242.2L472.4 231.5L473 230.9L473.5 235.1L474.1 230.2L474.7 226.3L475.3 234.8L475.9 234.1L476.4 227.9L477 225.9L477.6 226.5L478.2 227.9L478.8 228.6L479.3 226.3L479.9 236.7L480.5 226.1L481.1 226.5L481.7 221.3L482.2 217.4L482.8 215.7L483.4 222.7L484 231.8L484.5 232.4L485.1 215.3L485.7 229.1L486.3 232.1L486.9 238.2L487.4 230.6L488 232.3L488.6 223.7L489.2 238.7L489.8 241.9L490.3 234.5L490.9 226.7L491.5 233.6L492.1 227L492.7 229.6L493.2 221L493.8 234.2L494.4 240.5L495 235.1L495.6 228.6L496.1 237.2L496.7 230L497.3 232.2L497.9 229.7L498.4 236.2L499 236.7L499.6 233.8L500.2 237.4L500.8 237.6L501.3 237.7L501.9 236.8L502.5 240L503.1 240.5L503.7 234.7L504.2 233.8L504.8 223.5L505.4 235.3V253.6H332.2Z" fill="#233a70"/><g fill="none" stroke-width=".5"><path d="M332.2 219.2L332.8 227.2L333.4 225.5L333.9 224.2L334.5 228.7L335.1 225.9L335.7 226L336.3 232.4L336.8 222.6L337.4 224.1L338 226.3L338.6 222.3L339.2 217.1L339.7 218.3L340.3 216.6L340.9 221.8L341.5 212.4L342 215.5L342.6 215.6L343.2 224.9L343.8 211.1L344.4 218.8L344.9 222.1L345.5 212.9L346.1 222.5L346.7 229L347.3 226.6L347.8 235.3L348.4 226.8L349 233.8L349.6 237L350.2 232.8L350.7 239.3L351.3 234.2L351.9 240.4L352.5 237.2L353.1 238.5L353.6 232.4L354.2 231.7L354.8 236.6L355.4 234L355.9 236.4L356.5 234.8L357.1 237.9L357.7 240.1L358.3 240.4L358.8 235.5L359.4 231.5L360 235.7L360.6 236.4L361.2 229.2L361.7 232.3L362.3 231.5L362.9 229.9L363.5 230.1L364.1 230.9L364.6 234.5L365.2 228.9L365.8 230.9L366.4 227.3L367 232L367.5 236.2L368.1 230.4L368.7 224.4L369.3 230.5L369.9 231.7L370.4 232.4L371 231.6L371.6 229.5L372.2 232.9L372.7 225.2L373.3 231.4L373.9 230.9L374.5 227.8L375.1 228.5L375.6 233.7L376.2 232.5L376.8 231.7L377.4 234.3L378 238.6L378.5 232.7L379.1 232.3L379.7 233.7L380.3 237.2L380.9 235.7L381.4 236.8L382 236.4L382.6 232.9L383.2 232.7L383.8 234.9L384.3 235.1L384.9 234.3L385.5 235.3L386.1 235L386.7 236L387.2 233.9L387.8 227.2L388.4 230.3L389 233.1L389.5 233.1L390.1 234.2L390.7 230.6L391.3 230.5L391.9 235.7L392.4 230.2L393 233.2L393.6 227.4L394.2 231L394.8 226.5L395.3 233L395.9 232.7L396.5 231.3L397.1 229.4L397.7 231L398.2 236.1L398.8 232.5L399.4 233.1L400 234.5L400.6 235.3L401.1 229.3L401.7 235L402.3 236.3L402.9 232.7L403.4 234.1L404 234.8L404.6 232.8L405.2 233.7L405.8 234.1L406.3 232.8L406.9 234.3L407.5 235.9L408.1 234.6L408.7 234.4L409.2 231.8L409.8 234.8L410.4 236.8L411 231.5L411.6 235.7L412.1 237.6L412.7 231.4L413.3 234.6L413.9 231.6L414.5 234.6L415 236.4L415.6 236.3L416.2 233.3L416.8 231.5L417.4 232.1L417.9 229.3L418.5 232.5L419.1 226.5L419.7 232.7L420.2 226.8L420.8 223.4L421.4 221.7L422 219.1L422.6 230.9L423.1 222.1L423.7 220.1L424.3 221.1L424.9 228.6L425.5 224.2L426 219.4L426.6 231.8L427.2 225.3L427.8 224.4L428.4 231.9L428.9 229.8L429.5 236L430.1 236.8L430.7 236.6L431.3 233.8L431.8 234.3L432.4 231.4L433 236L433.6 233.7L434.2 230.5L434.7 231.3L435.3 236.2L435.9 230.5L436.5 233.6L437 231.2L437.6 231.4L438.2 228.9L438.8 231.9L439.4 237.4L439.9 236.1L440.5 230.2L441.1 233L441.7 229.1L442.3 231.5L442.8 234.3L443.4 229.2L444 234.5L444.6 237.9L445.2 226.8L445.7 238L446.3 231.4L446.9 231L447.5 233.4L448.1 238.4L448.6 231.9L449.2 238.3L449.8 238.4L450.4 236.1L450.9 233.5L451.5 234.7L452.1 233.6L452.7 236.6L453.3 236L453.8 238.4L454.4 236.5L455 234.5L455.6 236.6L456.2 234.9L456.7 237.4L457.3 236.7L457.9 234.2L458.5 233.8L459.1 230.5L459.6 230.7L460.2 225.5L460.8 179.7L461.4 179.7L462 179.7L462.5 179.7L463.1 179.7L463.7 179.7L464.3 179.7L464.9 179.7L465.4 179.7L466 179.7L466.6 179.7L467.2 179.6L467.7 202.6L468.3 205.6L468.9 197.6L469.5 191.9L470.1 198.5L470.6 202.4L471.2 202.2L471.8 209.3L472.4 198.6L473 200.6L473.5 186.1L474.1 191.7L474.7 198L475.3 204.3L475.9 197.4L476.4 191.7L477 186L477.6 181.6L478.2 175.9L478.8 179.9L479.3 181.1L479.9 202.4L480.5 194.9L481.1 191.4L481.7 181.9L482.2 184L482.8 175.9L483.4 188.5L484 198.7L484.5 194L485.1 182.7L485.7 177L486.3 187.4L486.9 203.3L487.4 194L488 200.6L488.6 186.7L489.2 211.5L489.8 205.2L490.3 205.1L490.9 192.8L491.5 200L492.1 179.9L492.7 195.3L493.2 185.2L493.8 200.5L494.4 204.3L495 197.4L495.6 183.8L496.1 184.5L496.7 198.5L497.3 185.3L497.9 194.9L498.4 208.2L499 204.8L499.6 213.3L500.2 204.2L500.8 203.7L501.3 212.9L501.9 214.8L502.5 216.8L503.1 209.4L503.7 208.7L504.2 205.9L504.8 196.1L505.4 201.9" stroke="#d08a3a"/><path d="M332.2 232.2L332.8 238.8L333.4 240L333.9 237.3L334.5 237.1L335.1 238L335.7 235.7L336.3 238.5L336.8 236.4L337.4 235.5L338 237.4L338.6 234.7L339.2 229.8L339.7 230.4L340.3 233.5L340.9 234.2L341.5 224.8L342 231.4L342.6 230.6L343.2 235.6L343.8 226.8L344.4 231.2L344.9 234.6L345.5 232.6L346.1 233.3L346.7 238.1L347.3 239.5L347.8 241.4L348.4 237.7L349 240.7L349.6 243.8L350.2 240.8L350.7 244.6L351.3 242.8L351.9 245.1L352.5 245.1L353.1 244.5L353.6 242.8L354.2 240.5L354.8 242.7L355.4 240.2L355.9 243.3L356.5 243.8L357.1 244.9L357.7 246.2L358.3 245.5L358.8 242.1L359.4 239.5L360 241.2L360.6 243.7L361.2 236.3L361.7 238L362.3 240.7L362.9 241L363.5 238L364.1 239.6L364.6 243.1L365.2 239L365.8 238.3L366.4 240.4L367 240.8L367.5 243L368.1 238.5L368.7 235.2L369.3 240.3L369.9 241.9L370.4 240.3L371 239.6L371.6 240L372.2 243.8L372.7 236.8L373.3 241.2L373.9 239.4L374.5 236.1L375.1 238.4L375.6 243.6L376.2 241.8L376.8 240.1L377.4 241.8L378 243.9L378.5 240.6L379.1 241.4L379.7 241L380.3 244L380.9 245.1L381.4 246.1L382 243.2L382.6 240.7L383.2 239.7L383.8 242.7L384.3 242.7L384.9 241.6L385.5 242.5L386.1 243.2L386.7 244L387.2 241.5L387.8 237.2L388.4 240.3L389 239.7L389.5 240.7L390.1 242L390.7 238.5L391.3 239.8L391.9 243.5L392.4 238.3L393 241.9L393.6 236.6L394.2 239.2L394.8 236.2L395.3 240.4L395.9 240.5L396.5 239.6L397.1 238.5L397.7 239.3L398.2 242.6L398.8 239.4L399.4 241.7L400 243.3L400.6 242.3L401.1 240L401.7 244L402.3 244.2L402.9 242.1L403.4 242.2L404 242.3L404.6 242.1L405.2 242.8L405.8 240.8L406.3 241.5L406.9 242.9L407.5 244.1L408.1 242.8L408.7 241.4L409.2 240.5L409.8 241.1L410.4 243.3L411 240.2L411.6 242.8L412.1 243.2L412.7 240.3L413.3 242.1L413.9 240.8L414.5 239.8L415 244.2L415.6 244.1L416.2 241.9L416.8 239.1L417.4 238.5L417.9 238.2L418.5 243.9L419.1 235.6L419.7 241.5L420.2 237.6L420.8 237.1L421.4 236L422 229.8L422.6 238.4L423.1 238.3L423.7 234.2L424.3 231.6L424.9 238.9L425.5 235.3L426 234.1L426.6 240.9L427.2 236.5L427.8 233.9L428.4 239.1L428.9 239.9L429.5 243.4L430.1 244.3L430.7 242.8L431.3 241.6L431.8 242.3L432.4 239.9L433 244.6L433.6 240.3L434.2 238.3L434.7 241L435.3 242.6L435.9 239.6L436.5 240.5L437 239.9L437.6 239.3L438.2 238L438.8 241.3L439.4 245L439.9 243.3L440.5 240.3L441.1 241.6L441.7 238.1L442.3 240.6L442.8 240.6L443.4 237.6L444 242.6L444.6 245.1L445.2 237L445.7 243L446.3 240.2L446.9 241.2L447.5 240.5L448.1 243.4L448.6 242.3L449.2 244.8L449.8 244.2L450.4 243.4L450.9 240.9L451.5 243.3L452.1 241.8L452.7 242.5L453.3 242.6L453.8 244.9L454.4 244.4L455 243.2L455.6 244.2L456.2 240.9L456.7 244.3L457.3 243.5L457.9 242.1L458.5 241.7L459.1 239.9L459.6 240.9L460.2 235.9L460.8 192.5L461.4 192.5L462 192.5L462.5 192.5L463.1 192.5L463.7 192.5L464.3 192.5L464.9 192.5L465.4 192.5L466 192.5L466.6 192.5L467.2 208.9L467.7 219.9L468.3 213L468.9 218.6L469.5 211.3L470.1 223.3L470.6 222.8L471.2 231.3L471.8 229L472.4 213.9L473 215.4L473.5 216.4L474.1 212.8L474.7 211.1L475.3 220.4L475.9 219.6L476.4 215.3L477 202.4L477.6 211.2L478.2 205.9L478.8 211.5L479.3 206.2L479.9 224.1L480.5 209.2L481.1 210.8L481.7 204.6L482.2 196.4L482.8 188.8L483.4 202.9L484 215.7L484.5 217.9L485.1 195.1L485.7 205.5L486.3 214.9L486.9 221.7L487.4 213.5L488 216.3L488.6 205.9L489.2 227.5L489.8 227.5L490.3 219.7L490.9 208.2L491.5 220.6L492.1 208.1L492.7 212.9L493.2 206.8L493.8 216.5L494.4 225.6L495 218.9L495.6 210.7L496.1 214.9L496.7 214.8L497.3 206.9L497.9 211.8L498.4 226L499 221.1L499.6 223.2L500.2 224.3L500.8 223.8L501.3 226.2L501.9 225.3L502.5 228.2L503.1 226.9L503.7 223.2L504.2 222.9L504.8 209L505.4 219.6" stroke="#62a878"/><path d="M332.2 242.5L332.8 245.6L333.4 246.5L333.9 244.2L334.5 245L335.1 245.2L335.7 245.1L336.3 245.9L336.8 245.4L337.4 246.1L338 245.8L338.6 245.3L339.2 240.5L339.7 242.3L340.3 243.3L340.9 244.5L341.5 236.5L342 242.6L342.6 242.9L343.2 244.4L343.8 239.4L344.4 242.5L344.9 244.9L345.5 242.7L346.1 243.3L346.7 246L347.3 246.9L347.8 247.1L348.4 244.5L349 247.6L349.6 248.6L350.2 247L350.7 249.5L351.3 248.6L351.9 249.3L352.5 249.4L353.1 248.7L353.6 248.2L354.2 246.9L354.8 248.4L355.4 246.2L355.9 249L356.5 248.8L357.1 249.1L357.7 250L358.3 249.8L358.8 247.7L359.4 246.1L360 247L360.6 248.8L361.2 243.6L361.7 245.4L362.3 246.9L362.9 248.3L363.5 246.4L364.1 246.5L364.6 249.3L365.2 245.9L365.8 246.7L366.4 246.2L367 246.4L367.5 247.6L368.1 246.8L368.7 244.3L369.3 247L369.9 247.5L370.4 247L371 246.3L371.6 246.6L372.2 248.9L372.7 244.2L373.3 248L373.9 246.5L374.5 243.9L375.1 245.8L375.6 248.3L376.2 248.2L376.8 245.9L377.4 247.6L378 248.6L378.5 246.4L379.1 247L379.7 247.7L380.3 249.1L380.9 250.1L381.4 249.4L382 248.3L382.6 247.3L383.2 246.8L383.8 247.9L384.3 247.8L384.9 247L385.5 248.5L386.1 248L386.7 249.2L387.2 246.8L387.8 245.4L388.4 246L389 246.1L389.5 246.4L390.1 247.6L390.7 245.8L391.3 247.7L391.9 247.8L392.4 246.2L393 248.5L393.6 244.2L394.2 247.2L394.8 244.5L395.3 247.5L395.9 246.4L396.5 245.6L397.1 246.8L397.7 247.9L398.2 248.3L398.8 246.4L399.4 247.5L400 248.1L400.6 247.6L401.1 248.6L401.7 248.3L402.3 249.1L402.9 246.9L403.4 248.1L404 248.5L404.6 247.4L405.2 248.5L405.8 247.6L406.3 247.7L406.9 247.9L407.5 248.6L408.1 247.1L408.7 247.7L409.2 246.4L409.8 247.4L410.4 248.9L411 246.3L411.6 247.8L412.1 248.5L412.7 247.1L413.3 248L413.9 246.1L414.5 246.2L415 248.8L415.6 247.9L416.2 247.6L416.8 246.1L417.4 246.6L417.9 245.1L418.5 249.3L419.1 245.8L419.7 247.9L420.2 245.4L420.8 245L421.4 244.5L422 242L422.6 245L423.1 247.1L423.7 243.6L424.3 243.2L424.9 245.9L425.5 244.8L426 244.7L426.6 247.6L427.2 244.1L427.8 243.4L428.4 246.8L428.9 247L429.5 248.1L430.1 248.5L430.7 248L431.3 247.4L431.8 248.1L432.4 246.5L433 248.9L433.6 246.8L434.2 245.4L434.7 247.7L435.3 247.9L435.9 247.3L436.5 246.6L437 245.9L437.6 246.9L438.2 245L438.8 247.2L439.4 249L439.9 248.5L440.5 246.5L441.1 247.5L441.7 245.9L442.3 247.3L442.8 247.1L443.4 245.1L444 248L444.6 249.6L445.2 244.6L445.7 248.1L446.3 246.9L446.9 247.7L447.5 247.1L448.1 248L448.6 248.4L449.2 248.6L449.8 249.1L450.4 248.7L450.9 247L451.5 248.7L452.1 247.2L452.7 247.5L453.3 248L453.8 249.4L454.4 249.4L455 248.6L455.6 249.5L456.2 246.7L456.7 248.7L457.3 249L457.9 248.5L458.5 248.2L459.1 246.7L459.6 247.6L460.2 243.1L460.8 214.7L461.4 214.7L462 214.7L462.5 214.7L463.1 214.7L463.7 214.7L464.3 214.7L464.9 214.7L465.4 214.7L466 214.7L466.6 214.7L467.2 232.1L467.7 235.3L468.3 229.6L468.9 228.2L469.5 229.3L470.1 239L470.6 237.9L471.2 244.8L471.8 242.2L472.4 231.5L473 230.9L473.5 235.1L474.1 230.2L474.7 226.3L475.3 234.8L475.9 234.1L476.4 227.9L477 225.9L477.6 226.5L478.2 227.9L478.8 228.6L479.3 226.3L479.9 236.7L480.5 226.1L481.1 226.5L481.7 221.3L482.2 217.4L482.8 215.7L483.4 222.7L484 231.8L484.5 232.4L485.1 215.3L485.7 229.1L486.3 232.1L486.9 238.2L487.4 230.6L488 232.3L488.6 223.7L489.2 238.7L489.8 241.9L490.3 234.5L490.9 226.7L491.5 233.6L492.1 227L492.7 229.6L493.2 221L493.8 234.2L494.4 240.5L495 235.1L495.6 228.6L496.1 237.2L496.7 230L497.3 232.2L497.9 229.7L498.4 236.2L499 236.7L499.6 233.8L500.2 237.4L500.8 237.6L501.3 237.7L501.9 236.8L502.5 240L503.1 240.5L503.7 234.7L504.2 233.8L504.8 223.5L505.4 235.3" stroke="#3c66b8"/></g><path d="M332.2 168.8V253.6H505.4M330.8 253.6H332.2M330.8 232.25H332.2M330.8 210.9H332.2M330.8 189.55H332.2M330.8 168.2H332.2M332.2 253.6v1.300M346.7 253.6v1.300M361.2 253.6v1.300M375 253.6v1.300M389.5 253.6v1.300M404 253.6v1.300M418.5 253.6v1.300M433 253.6v1.300M447.5 253.6v1.300M463.2 253.6v1.300M477.6 253.6v1.300M490.9 253.6v1.300M505.4 253.6v1.300" fill="none" stroke="#3a4352" stroke-width=".5"/><g class="tk"><text x="329.8" y="256" text-anchor="end">0</text><text x="329.8" y="234" text-anchor="end">5</text><text x="329.8" y="213" text-anchor="end">10</text><text x="329.8" y="192" text-anchor="end">15</text><text x="329.8" y="174" text-anchor="end">20</text><text x="332.2" y="260" text-anchor="middle">15:20</text><text x="346.7" y="260" text-anchor="middle">17:20</text><text x="361.2" y="260" text-anchor="middle">19:20</text><text x="375" y="260" text-anchor="middle">21:15</text><text x="389.5" y="260" text-anchor="middle">23:15</text><text x="404" y="260" text-anchor="middle">01:15</text><text x="418.5" y="260" text-anchor="middle">03:15</text><text x="433" y="260" text-anchor="middle">05:15</text><text x="447.5" y="260" text-anchor="middle">07:15</text><text x="463.2" y="260" text-anchor="middle">09:25</text><text x="477.6" y="260" text-anchor="middle">11:25</text><text x="490.9" y="260" text-anchor="middle">13:15</text><text x="505.4" y="260" text-anchor="middle">15:15</text></g><text class="ax" transform="translate(313.6 211.1) rotate(-90)" text-anchor="middle">all service units</text></svg></section>
<section class="panel" style="left:552px;top:157px;width:204px;height:110px"><header class="ph"><h2 class="tx" style="font-weight:400;top:3px;font-size:6.3px;left:4px;color:#e9ecf1">Swap</h2><svg class="abs" style="left:192px;top:4.5px" width="7" height="3" viewBox="0 0 7 3"><circle cx="1.5" cy="1.5" r="0.7" fill="#e6e9ee"/><circle cx="3.5" cy="1.5" r="0.7" fill="#e6e9ee"/><circle cx="5.5" cy="1.5" r="0.7" fill="#e6e9ee"/></svg></header><svg class="abs" style="left:0px;top:0px" width="204" height="110" viewBox="552 157 204 110"><path d="M576.6 232.2H749.5" stroke="#222a37" stroke-width=".5"/><path d="M576.6 210.9H749.5" stroke="#222a37" stroke-width=".5"/><path d="M576.6 189.5H749.5" stroke="#222a37" stroke-width=".5"/><path d="M576.6 174.2L650 174.2L690 174.1L697 174.6L715 174.9L721.5 175.1L722.4 185.6L726 183.8L733 182L740 181L745 180.3L749.5 180.2V253.6H576.6Z" fill="#22386d"/><path d="M576.6 174.2L650 174.2L690 174.1L697 174.6L715 174.9L721.5 175.1L722.4 185.6L726 183.8L733 182L740 181L745 180.3L749.5 180.2" fill="none" stroke="#2f4c8c" stroke-width=".5"/><path d="M576.6 168.8V253.6H749.5M575.2 253.6H576.6M575.2 232.2H576.6M575.2 210.9H576.6M575.2 189.5H576.6M575.2 168.2H576.6M576.6 253.6v1.300M591.1 253.6v1.300M605.5 253.6v1.300M619.4 253.6v1.300M633.8 253.6v1.300M648.3 253.6v1.300M662.7 253.6v1.300M677.2 253.6v1.300M691.7 253.6v1.300M707.3 253.6v1.300M721.8 253.6v1.300M735 253.6v1.300M749.5 253.6v1.300" fill="none" stroke="#3a4352" stroke-width=".5"/><g class="tk"><text x="574.2" y="256" text-anchor="end">0</text><text x="574.2" y="234" text-anchor="end">450</text><text x="574.2" y="213" text-anchor="end">900</text><text x="574.2" y="192" text-anchor="end">1350</text><text x="574.2" y="174" text-anchor="end">1800</text><text x="576.6" y="260" text-anchor="middle">15:20</text><text x="591.1" y="260" text-anchor="middle">17:20</text><text x="605.5" y="260" text-anchor="middle">19:20</text><text x="619.4" y="260" text-anchor="middle">21:15</text><text x="633.8" y="260" text-anchor="middle">23:15</text><text x="648.3" y="260" text-anchor="middle">01:15</text><text x="662.7" y="260" text-anchor="middle">03:15</text><text x="677.2" y="260" text-anchor="middle">05:15</text><text x="691.7" y="260" text-anchor="middle">07:15</text><text x="707.3" y="260" text-anchor="middle">09:25</text><text x="721.8" y="260" text-anchor="middle">11:25</text><text x="735" y="260" text-anchor="middle">13:15</text><text x="749.5" y="260" text-anchor="middle">15:15</text></g><text class="ax" transform="translate(558 211.1) rotate(-90)" text-anchor="middle">MB</text></svg></section>
<section class="panel" style="left:758px;top:157px;width:223px;height:110px"><header class="ph"><h2 class="tx" style="font-weight:400;top:3px;font-size:6.3px;left:4.6px;color:#e9ecf1">Total Processes</h2><svg class="abs" style="left:211.4px;top:4.5px" width="7" height="3" viewBox="0 0 7 3"><circle cx="1.5" cy="1.5" r="0.7" fill="#e6e9ee"/><circle cx="3.5" cy="1.5" r="0.7" fill="#e6e9ee"/><circle cx="5.5" cy="1.5" r="0.7" fill="#e6e9ee"/></svg></header><svg class="abs" style="left:0px;top:0px" width="223" height="110" viewBox="758 157 223 110"><path d="M837.82 261.13A49.9 49.9 0 0 1 820.92 213.38L844.57 217.98A25.8 25.8 0 0 0 853.32 242.66Z" fill="#4ec45e"/><path d="M820.92 213.38A49.9 49.9 0 0 1 919.51 217.51L895.55 220.11A25.8 25.8 0 0 0 844.57 217.98Z" fill="#1a3f1e"/><path d="M919.51 217.51A49.9 49.9 0 0 1 901.98 261.13L886.48 242.66A25.8 25.8 0 0 0 895.55 220.11Z" fill="#584214"/><text x="869.9" y="226" text-anchor="middle" font-size="12" font-weight="700" fill="#fff">109</text><text x="869.9" y="234" text-anchor="middle" font-size="5.300" fill="#c5cad3">procs / 500</text></svg></section>
<section class="panel" style="left:119px;top:269px;width:430px;height:137px"><header class="ph"><h2 class="tx" style="font-weight:400;top:3px;font-size:6.3px;left:4px;color:#e9ecf1">Host Performance</h2><svg class="abs" style="left:417.6px;top:4.8px" width="7" height="3" viewBox="0 0 7 3"><circle cx="1.5" cy="1.5" r="0.7" fill="#e6e9ee"/><circle cx="3.5" cy="1.5" r="0.7" fill="#e6e9ee"/><circle cx="5.5" cy="1.5" r="0.7" fill="#e6e9ee"/></svg></header><svg class="abs" style="left:0px;top:0px" width="430" height="137" viewBox="119 269 430 137"><path d="M143.6 365.1H542.8" stroke="#222a37" stroke-width=".5"/><path d="M143.6 336.9H542.8" stroke="#222a37" stroke-width=".5"/><path d="M143.6 308.7H542.8" stroke="#222a37" stroke-width=".5"/><path d="M143.6 388.2L144.3 388.6L144.9 388.6L145.6 389L146.3 389.6L146.9 389.2L147.6 389.3L148.3 389.3L148.9 389.4L149.6 389.1L150.3 381.4L150.9 372.5L151.6 364.2L152.3 372.9L152.9 381.6L153.6 389.6L154.3 389.4L154.9 389.3L155.6 389.2L156.3 389.4L156.9 389.8L157.6 389.5L158.3 389L158.9 388.8L159.6 388.6L160.3 388.6L160.9 386.8L161.6 384.2L162.3 387.1L162.9 389L163.6 389.1L164.3 389.4L164.9 389.1L165.6 389.5L166.3 388.8L166.9 375.1L167.6 360.2L168.3 344.9L168.9 360.5L169.6 375.6L170.3 389L170.9 389L171.6 389L172.3 388.7L172.9 388.5L173.6 388.6L174.3 388.9L174.9 388L175.6 388.2L176.3 388.6L176.9 388L177.6 388.7L178.3 388.8L178.9 389.1L179.6 389.8L180.3 390.5L180.9 390.5L181.6 390L182.3 389.3L182.9 388.7L183.6 388.7L184.3 388.4L184.9 388.5L185.6 388.4L186.3 388.3L186.9 388.6L187.6 388.7L188.3 388.6L188.9 388.8L189.6 388L190.3 387.7L190.9 388.2L191.6 388.5L192.3 389.3L192.9 389.9L193.6 389.6L194.2 389.7L194.9 388.8L195.6 388L196.2 388.3L196.9 388.4L197.6 389.2L198.2 389.8L198.9 389.1L199.6 388.4L200.2 388.4L200.9 389.1L201.6 389.3L202.2 389.3L202.9 388.2L203.6 385.9L204.2 384.4L204.9 386.3L205.6 388.2L206.2 389.3L206.9 389.8L207.6 389.3L208.2 389.2L208.9 389.2L209.6 389L210.2 389.3L210.9 389.1L211.6 389.1L212.2 388.7L212.9 376.2L213.6 361.2L214.2 346.4L214.9 361.7L215.6 376.4L216.2 390L216.9 390.2L217.6 388L218.2 385.9L218.9 386.5L219.6 388.4L220.2 388.1L220.9 387.9L221.6 388.8L222.2 389L222.9 388.8L223.6 388.7L224.2 389.5L224.9 389.4L225.6 389.8L226.2 390.3L226.9 389L227.6 389.1L228.2 388.8L228.9 388.8L229.6 389.3L230.2 388.9L230.9 389.4L231.6 389.2L232.2 389.4L232.9 389.9L233.6 389.5L234.2 389.3L234.9 389.3L235.6 389.4L236.2 388.8L236.9 389.2L237.6 389.1L238.2 388.6L238.9 389.6L239.6 389.5L240.2 389L240.9 388.8L241.6 388.7L242.2 388.2L242.9 388.5L243.6 388.8L244.2 388.8L244.9 389.3L245.6 389.1L246.2 388.9L246.9 389.2L247.6 389L248.2 389.3L248.9 389.6L249.6 389.4L250.2 389.1L250.9 388.9L251.6 388.4L252.2 387.8L252.9 388.2L253.6 388.4L254.2 389L254.9 389.4L255.6 389.1L256.2 388.5L256.9 388.6L257.6 388.5L258.2 388.4L258.9 388.1L259.6 387.7L260.2 387.3L260.9 385.3L261.6 383.4L262.2 386.6L262.9 389.7L263.6 388.4L264.2 386.7L264.9 388.3L265.6 389.7L266.2 389.1L266.9 387.3L267.6 385.6L268.2 386.8L268.9 388.8L269.6 389L270.2 389.6L270.9 390.3L271.6 389.7L272.2 389.7L272.9 388.9L273.6 388L274.2 387.9L274.9 387.9L275.6 388.4L276.2 389L276.9 389L277.6 389.1L278.2 388.9L278.9 389L279.6 388.9L280.2 388.2L280.9 387.9L281.6 387.9L282.2 388.6L282.9 389.5L283.6 390.1L284.2 390.5L284.9 390.5L285.6 390.1L286.2 390.4L286.9 389.7L287.6 388.7L288.2 388.6L288.9 388.2L289.6 388.9L290.2 389.4L290.9 388.9L291.6 387.8L292.2 386.3L292.9 387.5L293.5 389.3L294.2 390L294.9 389.4L295.5 389.8L296.2 389.2L296.9 388.8L297.5 389.1L298.2 388.9L298.9 389L299.5 389.4L300.2 388.7L300.9 389L301.5 388.8L302.2 388.8L302.9 389.6L303.5 389.7L304.2 390.2L304.9 389.5L305.5 389.6L306.2 389.4L306.9 389.5L307.5 389.6L308.2 389.1L308.9 389.3L309.5 388.3L310.2 388.5L310.9 388.2L311.5 388.4L312.2 389.1L312.9 389.1L313.5 389.4L314.2 389.1L314.9 389.3L315.5 390.2L316.2 390.5L316.9 390.5L317.5 390.5L318.2 389.3L318.9 388.4L319.5 388L320.2 387.6L320.9 387.7L321.5 388.1L322.2 388.1L322.9 388.5L323.5 388.1L324.2 386.3L324.9 384.2L325.5 385.7L326.2 386.9L326.9 388.1L327.5 388.6L328.2 388.7L328.9 389L329.5 389L330.2 389.7L330.9 390.4L331.5 390.5L332.2 389.6L332.9 389L333.5 388.7L334.2 388.5L334.9 389.3L335.5 389.3L336.2 389.1L336.9 389.5L337.5 389.6L338.2 389.4L338.9 389.2L339.5 388.5L340.2 388.6L340.9 388.2L341.5 387L342.2 386.1L342.9 386.6L343.5 388.2L344.2 388.5L344.9 388.4L345.5 388.5L346.2 388.3L346.9 387.9L347.5 388L348.2 388.3L348.9 387.8L349.5 388.2L350.2 388.2L350.9 388.3L351.5 389.7L352.2 389.9L352.9 390L353.5 389.6L354.2 389L354.9 388.5L355.5 388.2L356.2 388.1L356.9 388.1L357.5 388.3L358.2 388.7L358.9 389.2L359.5 388.8L360.2 389.2L360.9 389.2L361.5 388.8L362.2 389.9L362.9 389.3L363.5 389.4L364.2 389.4L364.9 388.8L365.5 389.5L366.2 389.4L366.9 389.4L367.5 389L368.2 388.4L368.9 389L369.5 388.7L370.2 388.7L370.9 388.6L371.5 388L372.2 388.5L372.9 388.6L373.5 388.9L374.2 388.2L374.9 388.1L375.5 388.6L376.2 388.6L376.9 389L377.5 389.1L378.2 389.5L378.9 389L379.5 389.3L380.2 389.3L380.9 388.3L381.5 389L382.2 389.5L382.9 389.1L383.5 389.4L384.2 388.7L384.9 385.8L385.5 383.3L386.2 385.7L386.9 388.7L387.5 378.4L388.2 366.9L388.9 354.7L389.5 366L390.2 377.7L390.9 388L391.5 389.2L392.2 389.3L392.9 389.6L393.5 388.7L394.2 386L394.8 383.2L395.5 385.7L396.2 387.5L396.8 388.2L397.5 389L398.2 389.3L398.8 389.7L399.5 389.6L400.2 389.5L400.8 388.9L401.5 386.1L402.2 383.5L402.8 386.4L403.5 389.1L404.2 389L404.8 388.7L405.5 388.7L406.2 388.5L406.8 388.6L407.5 388.5L408.2 388.3L408.8 388.7L409.5 389.7L410.2 390L410.8 390L411.5 390.1L412.2 389.9L412.8 389.9L413.5 390.5L414.2 390.5L414.8 390.1L415.5 390L416.2 389.2L416.8 388L417.5 386.8L418.2 385.9L418.8 386.8L419.5 387.2L420.2 387.6L420.8 387.6L421.5 387.8L422.2 388.3L422.8 389.4L423.5 389.8L424.2 390.3L424.8 390.5L425.5 389.6L426.2 389.5L426.8 388.3L427.5 388.1L428.2 388.4L428.8 388.5L429.5 388.8L430.2 388.8L430.8 387.7L431.5 385.6L432.2 384.2L432.8 386L433.5 387.7L434.2 388.6L434.8 388.5L435.5 388.1L436.2 387.9L436.8 388L437.5 388.9L438.2 388.6L438.8 386.5L439.5 384.1L440.2 380.9L440.8 378.7L441.5 376.1L442.2 376.3L442.8 375.9L443.5 376L444.2 375.7L444.8 375.1L445.5 375.3L446.2 375.4L446.8 375.6L447.5 375.8L448.2 375.5L448.8 375.8L449.5 376.3L450.2 376.5L450.8 377.1L451.5 377.2L452.2 376.7L452.8 377L453.5 378L454.2 379.9L454.8 382.6L455.5 384.5L456.2 386.9L456.8 389.7L457.5 389.7L458.2 388.9L458.8 376.4L459.5 362.8L460.2 348.9L460.8 362.8L461.5 376.5L462.2 388.3L462.8 388.8L463.5 388.5L464.2 388.9L464.8 388.5L465.5 388.7L466.2 389.7L466.8 389.5L467.5 389.3L468.2 388.8L468.8 388.6L469.5 388.2L470.2 384.3L470.8 380.8L471.5 384.8L472.2 388.7L472.8 388.4L473.5 388L474.2 387.7L474.8 387.9L475.5 388.4L476.2 388.3L476.8 388.8L477.5 389L478.2 388.4L478.8 386.8L479.5 385.2L480.2 386.9L480.8 389.2L481.5 388.8L482.2 358.3L482.8 324L483.5 289.3L484.2 323.5L484.8 357.8L485.5 388L486.2 388.5L486.8 388.8L487.5 388.8L488.2 388.4L488.8 388.5L489.5 388.5L490.2 388.2L490.8 388.3L491.5 388.5L492.2 388.8L492.8 389.5L493.5 389.4L494.1 389.3L494.8 388.8L495.5 388.9L496.1 389.1L496.8 388.5L497.5 388.8L498.1 388.7L498.8 389L499.5 389.6L500.1 389.6L500.8 389.2L501.5 389.1L502.1 388.7L502.8 387.9L503.5 388.3L504.1 388.2L504.8 388.5L505.5 389L506.1 388.8L506.8 389L507.5 389.3L508.1 388.8L508.8 388.9L509.5 389.2L510.1 389.4L510.8 389.8L511.5 389.7L512.1 389L512.8 388.1L513.5 388.2L514.1 388.2L514.8 388.9L515.5 388.2L516.1 383.9L516.8 380.4L517.5 383.4L518.1 382.4L518.8 378.7L519.5 383L520.1 388.2L520.8 388.3L521.5 388.7L522.1 389.4L522.8 389.3L523.5 389.7L524.1 389.5L524.8 389.1L525.5 388.9L526.1 388.2L526.8 388L527.5 388.2L528.1 388.1L528.8 388.5L529.5 388.7L530.1 389L530.8 389.3L531.5 389.4L532.1 389.1L532.8 388.7L533.5 388.5L534.1 388.3L534.8 388.7L535.5 388.8L536.1 388.3L536.8 388.2L537.5 387.6L538.1 387.8L538.8 388.2L539.5 388.8L540.1 388.9L540.8 389L541.5 389.4L542.1 389.3L542.8 389.6V393.3H143.6Z" fill="#7a4a80"/><path d="M143.6 388.6L144.3 389L144.9 389L145.6 389.3L146.3 389.9L146.9 389.5L147.6 389.6L148.3 389.6L148.9 389.7L149.6 389.4L150.3 382.3L150.9 374L151.6 366.3L152.3 374.4L152.9 382.5L153.6 389.9L154.3 389.7L154.9 389.6L155.6 389.5L156.3 389.7L156.9 390.1L157.6 389.8L158.3 389.4L158.9 389.2L159.6 389L160.3 389L160.9 387.1L161.6 384.5L162.3 387.3L162.9 389.3L163.6 389.5L164.3 389.7L164.9 389.4L165.6 389.8L166.3 389.1L166.9 376.4L167.6 362.5L168.3 348.3L168.9 362.8L169.6 376.8L170.3 389.3L170.9 389.4L171.6 389.3L172.3 389.1L172.9 388.9L173.6 388.9L174.3 389.2L174.9 388.5L175.6 388.6L176.3 388.9L176.9 388.5L177.6 389.1L178.3 389.1L178.9 389.5L179.6 390.1L180.3 390.7L180.9 390.7L181.6 390.3L182.3 389.6L182.9 389.1L183.6 389L184.3 388.8L184.9 388.9L185.6 388.8L186.3 388.7L186.9 389L187.6 389.1L188.3 389L188.9 389.1L189.6 388.4L190.3 388.1L190.9 388.6L191.6 388.9L192.3 389.6L192.9 390.2L193.6 389.9L194.2 390L194.9 389.1L195.6 388.4L196.2 388.7L196.9 388.8L197.6 389.5L198.2 390L198.9 389.5L199.6 388.8L200.2 388.8L200.9 389.4L201.6 389.7L202.2 389.6L202.9 388.5L203.6 386.3L204.2 384.7L204.9 386.7L205.6 388.5L206.2 389.6L206.9 390.1L207.6 389.6L208.2 389.6L208.9 389.5L209.6 389.3L210.2 389.6L210.9 389.4L211.6 389.4L212.2 389.1L212.9 377.4L213.6 363.5L214.2 349.7L214.9 363.9L215.6 377.6L216.2 390.2L216.9 390.4L217.6 388.3L218.2 386.2L218.9 386.9L219.6 388.7L220.2 388.5L220.9 388.4L221.6 389.1L222.2 389.3L222.9 389.2L223.6 389.1L224.2 389.8L224.9 389.7L225.6 390.1L226.2 390.5L226.9 389.4L227.6 389.5L228.2 389.1L228.9 389.1L229.6 389.6L230.2 389.2L230.9 389.7L231.6 389.6L232.2 389.8L232.9 390.2L233.6 389.8L234.2 389.6L234.9 389.6L235.6 389.7L236.2 389.2L236.9 389.5L237.6 389.4L238.2 389L238.9 389.9L239.6 389.8L240.2 389.3L240.9 389.2L241.6 389L242.2 388.6L242.9 388.9L243.6 389.2L244.2 389.1L244.9 389.6L245.6 389.4L246.2 389.3L246.9 389.5L247.6 389.4L248.2 389.6L248.9 389.9L249.6 389.7L250.2 389.5L250.9 389.3L251.6 388.7L252.2 388.3L252.9 388.6L253.6 388.8L254.2 389.4L254.9 389.7L255.6 389.5L256.2 388.9L256.9 389L257.6 388.8L258.2 388.8L258.9 388.6L259.6 388.1L260.2 387.7L260.9 385.6L261.6 383.7L262.2 386.9L262.9 389.9L263.6 388.6L264.2 386.9L264.9 388.5L265.6 390L266.2 389.4L266.9 387.7L267.6 386L268.2 387.2L268.9 389.1L269.6 389.3L270.2 389.9L270.9 390.5L271.6 390L272.2 390L272.9 389.2L273.6 388.4L274.2 388.4L274.9 388.4L275.6 388.8L276.2 389.4L276.9 389.3L277.6 389.5L278.2 389.3L278.9 389.3L279.6 389.2L280.2 388.6L280.9 388.3L281.6 388.3L282.2 389L282.9 389.8L283.6 390.3L284.2 390.7L284.9 390.7L285.6 390.4L286.2 390.6L286.9 390L287.6 389L288.2 389L288.9 388.6L289.6 389.3L290.2 389.7L290.9 389.2L291.6 388.1L292.2 386.6L292.9 387.7L293.5 389.6L294.2 390.2L294.9 389.7L295.5 390.1L296.2 389.5L296.9 389.2L297.5 389.4L298.2 389.3L298.9 389.3L299.5 389.7L300.2 389.1L300.9 389.4L301.5 389.2L302.2 389.2L302.9 389.9L303.5 390L304.2 390.4L304.9 389.8L305.5 389.9L306.2 389.7L306.9 389.8L307.5 389.9L308.2 389.4L308.9 389.6L309.5 388.7L310.2 388.9L310.9 388.6L311.5 388.8L312.2 389.5L312.9 389.4L313.5 389.7L314.2 389.4L314.9 389.6L315.5 390.5L316.2 390.7L316.9 390.7L317.5 390.7L318.2 389.6L318.9 388.8L319.5 388.4L320.2 388.1L320.9 388.2L321.5 388.6L322.2 388.5L322.9 388.9L323.5 388.4L324.2 386.7L324.9 384.5L325.5 386.1L326.2 387.4L326.9 388.6L327.5 389L328.2 389.1L328.9 389.4L329.5 389.4L330.2 390L330.9 390.7L331.5 390.7L332.2 389.9L332.9 389.3L333.5 389.1L334.2 388.9L334.9 389.6L335.5 389.6L336.2 389.4L336.9 389.8L337.5 389.9L338.2 389.8L338.9 389.5L339.5 388.9L340.2 389L340.9 388.6L341.5 387.4L342.2 386.4L342.9 387.1L343.5 388.6L344.2 388.9L344.9 388.8L345.5 388.9L346.2 388.7L346.9 388.4L347.5 388.4L348.2 388.7L348.9 388.3L349.5 388.6L350.2 388.7L350.9 388.7L351.5 390L352.2 390.2L352.9 390.3L353.5 389.9L354.2 389.3L354.9 388.9L355.5 388.6L356.2 388.5L356.9 388.5L357.5 388.7L358.2 389L358.9 389.6L359.5 389.2L360.2 389.5L360.9 389.5L361.5 389.2L362.2 390.2L362.9 389.6L363.5 389.7L364.2 389.7L364.9 389.2L365.5 389.8L366.2 389.7L366.9 389.7L367.5 389.3L368.2 388.8L368.9 389.3L369.5 389L370.2 389.1L370.9 389L371.5 388.4L372.2 388.9L372.9 389L373.5 389.3L374.2 388.6L374.9 388.5L375.5 389L376.2 388.9L376.9 389.3L377.5 389.4L378.2 389.8L378.9 389.3L379.5 389.6L380.2 389.6L380.9 388.7L381.5 389.4L382.2 389.8L382.9 389.4L383.5 389.7L384.2 389.1L384.9 386.2L385.5 383.7L386.2 386.1L386.9 389L387.5 379.4L388.2 368.7L388.9 357.5L389.5 367.9L390.2 378.8L390.9 388.4L391.5 389.5L392.2 389.6L392.9 389.9L393.5 389L394.2 386.3L394.8 383.6L395.5 386L396.2 387.9L396.8 388.6L397.5 389.4L398.2 389.6L398.8 390L399.5 389.9L400.2 389.8L400.8 389.2L401.5 386.4L402.2 383.7L402.8 386.7L403.5 389.4L404.2 389.3L404.8 389.1L405.5 389.1L406.2 388.9L406.8 389L407.5 388.9L408.2 388.7L408.8 389.1L409.5 390L410.2 390.2L410.8 390.2L411.5 390.3L412.2 390.2L412.8 390.1L413.5 390.7L414.2 390.7L414.8 390.4L415.5 390.2L416.2 389.5L416.8 388.4L417.5 387.2L418.2 386.4L418.8 387.3L419.5 387.7L420.2 388.1L420.8 388.1L421.5 388.2L422.2 388.7L422.8 389.7L423.5 390.1L424.2 390.5L424.8 390.7L425.5 389.9L426.2 389.8L426.8 388.7L427.5 388.5L428.2 388.8L428.8 388.9L429.5 389.2L430.2 389.2L430.8 388.1L431.5 386.1L432.2 384.6L432.8 386.4L433.5 388.1L434.2 388.9L434.8 388.9L435.5 388.5L436.2 388.4L436.8 388.4L437.5 389.3L438.2 388.9L438.8 386.9L439.5 384.5L440.2 381.3L440.8 379.1L441.5 376.5L442.2 376.6L442.8 376.3L443.5 376.3L444.2 376.1L444.8 375.5L445.5 375.7L446.2 375.8L446.8 376L447.5 376.1L448.2 375.9L448.8 376.1L449.5 376.7L450.2 376.8L450.8 377.4L451.5 377.4L452.2 377L452.8 377.3L453.5 378.3L454.2 380.3L454.8 382.9L455.5 384.8L456.2 387.2L456.8 390L457.5 390L458.2 389.2L458.8 377.6L459.5 365L460.2 352L460.8 365L461.5 377.7L462.2 388.7L462.8 389.2L463.5 388.8L464.2 389.3L464.8 388.9L465.5 389L466.2 390L466.8 389.8L467.5 389.6L468.2 389.1L468.8 389L469.5 388.6L470.2 384.6L470.8 381L471.5 385.1L472.2 389L472.8 388.8L473.5 388.4L474.2 388.2L474.8 388.3L475.5 388.8L476.2 388.7L476.8 389.1L477.5 389.4L478.2 388.8L478.8 387.2L479.5 385.5L480.2 387.3L480.8 389.6L481.5 389.1L482.2 360.7L482.8 328.8L483.5 296.6L484.2 328.4L484.8 360.2L485.5 388.3L486.2 388.9L486.8 389.2L487.5 389.2L488.2 388.8L488.8 388.9L489.5 388.9L490.2 388.6L490.8 388.7L491.5 388.9L492.2 389.1L492.8 389.8L493.5 389.7L494.1 389.6L494.8 389.2L495.5 389.3L496.1 389.4L496.8 388.9L497.5 389.2L498.1 389.1L498.8 389.3L499.5 389.9L500.1 389.9L500.8 389.6L501.5 389.5L502.1 389.1L502.8 388.4L503.5 388.7L504.1 388.6L504.8 388.9L505.5 389.3L506.1 389.1L506.8 389.3L507.5 389.6L508.1 389.2L508.8 389.2L509.5 389.5L510.1 389.7L510.8 390.1L511.5 390L512.1 389.4L512.8 388.5L513.5 388.6L514.1 388.6L514.8 389.3L515.5 388.6L516.1 384.3L516.8 380.8L517.5 383.8L518.1 382.8L518.8 379L519.5 383.4L520.1 388.6L520.8 388.7L521.5 389.1L522.1 389.7L522.8 389.6L523.5 390L524.1 389.8L524.8 389.5L525.5 389.2L526.1 388.6L526.8 388.4L527.5 388.6L528.1 388.5L528.8 388.9L529.5 389.1L530.1 389.3L530.8 389.6L531.5 389.8L532.1 389.5L532.8 389L533.5 388.8L534.1 388.7L534.8 389.1L535.5 389.2L536.1 388.7L536.8 388.6L537.5 388.1L538.1 388.3L538.8 388.6L539.5 389.2L540.1 389.3L540.8 389.3L541.5 389.7L542.1 389.6L542.8 389.9V393.3H143.6Z" fill="#6e4a2e"/><path d="M143.6 391.9L144.3 392L144.9 392L145.6 392.1L146.3 392.3L146.9 392.1L147.6 392.2L148.3 392.2L148.9 392.2L149.6 392L150.3 390.2L150.9 388.3L151.6 386.6L152.3 388.4L152.9 390.3L153.6 392.1L154.3 392.2L154.9 392.2L155.6 392.2L156.3 392.2L156.9 392.3L157.6 392.2L158.3 392.1L158.9 392.1L159.6 392L160.3 392.2L160.9 392.4L161.6 392.4L162.3 392.5L162.9 392.3L163.6 392.1L164.3 392.2L164.9 392.1L165.6 392.2L166.3 391.8L166.9 388.6L167.6 385.5L168.3 382.4L168.9 385.6L169.6 388.8L170.3 391.8L170.9 392.1L171.6 392.1L172.3 392L172.9 392L173.6 392L174.3 392.1L174.9 391.8L175.6 391.9L176.3 392L176.9 391.8L177.6 392L178.3 392L178.9 392.1L179.6 392.3L180.3 392.5L180.9 392.5L181.6 392.4L182.3 392.2L182.9 392L183.6 392L184.3 391.9L184.9 392L185.6 391.9L186.3 391.9L186.9 392L187.6 392L188.3 392L188.9 392L189.6 391.8L190.3 391.7L190.9 391.9L191.6 392L192.3 392.2L192.9 392.3L193.6 392.3L194.2 392.3L194.9 392L195.6 391.8L196.2 391.9L196.9 391.9L197.6 392.1L198.2 392.3L198.9 392.1L199.6 391.9L200.2 391.9L200.9 392.1L201.6 392.2L202.2 392.2L202.9 392.2L203.6 392L204.2 392L204.9 392.1L205.6 392.2L206.2 392.2L206.9 392.3L207.6 392.2L208.2 392.2L208.9 392.1L209.6 392.1L210.2 392.2L210.9 392.1L211.6 392.1L212.2 391.8L212.9 388.9L213.6 385.8L214.2 382.8L214.9 386L215.6 389L216.2 392.1L216.9 392.4L217.6 392.3L218.2 392.3L218.9 391.9L219.6 391.9L220.2 391.9L220.9 391.8L221.6 392L222.2 392.1L222.9 392L223.6 392L224.2 392.2L224.9 392.2L225.6 392.3L226.2 392.4L226.9 392.1L227.6 392.1L228.2 392L228.9 392L229.6 392.2L230.2 392.1L230.9 392.2L231.6 392.2L232.2 392.2L232.9 392.4L233.6 392.2L234.2 392.2L234.9 392.2L235.6 392.2L236.2 392L236.9 392.2L237.6 392.1L238.2 392L238.9 392.3L239.6 392.2L240.2 392.1L240.9 392.1L241.6 392L242.2 391.9L242.9 391.9L243.6 392.1L244.2 392L244.9 392.2L245.6 392.1L246.2 392.1L246.9 392.1L247.6 392.1L248.2 392.2L248.9 392.3L249.6 392.2L250.2 392.1L250.9 392.1L251.6 391.9L252.2 391.8L252.9 391.9L253.6 391.9L254.2 392.1L254.9 392.2L255.6 392.1L256.2 392L256.9 392L257.6 391.9L258.2 391.9L258.9 391.9L259.6 391.7L260.2 391.8L260.9 392L261.6 392.3L262.2 392.4L262.9 392.5L263.6 392.4L264.2 392.5L264.9 392.4L265.6 392.3L266.2 392.2L266.9 392L267.6 391.9L268.2 391.9L268.9 392.1L269.6 392.1L270.2 392.3L270.9 392.4L271.6 392.3L272.2 392.3L272.9 392.1L273.6 391.8L274.2 391.8L274.9 391.8L275.6 391.9L276.2 392.1L276.9 392.1L277.6 392.1L278.2 392.1L278.9 392.1L279.6 392.1L280.2 391.9L280.9 391.8L281.6 391.8L282.2 392L282.9 392.2L283.6 392.4L284.2 392.5L284.9 392.5L285.6 392.4L286.2 392.5L286.9 392.3L287.6 392L288.2 392L288.9 391.9L289.6 392.1L290.2 392.2L290.9 392.3L291.6 392.4L292.2 392.4L292.9 392.3L293.5 392.4L294.2 392.4L294.9 392.2L295.5 392.3L296.2 392.2L296.9 392L297.5 392.1L298.2 392.1L298.9 392.1L299.5 392.2L300.2 392L300.9 392.1L301.5 392L302.2 392L302.9 392.3L303.5 392.3L304.2 392.4L304.9 392.2L305.5 392.3L306.2 392.2L306.9 392.2L307.5 392.3L308.2 392.1L308.9 392.2L309.5 391.9L310.2 391.9L310.9 391.9L311.5 391.9L312.2 392.1L312.9 392.1L313.5 392.2L314.2 392.1L314.9 392.2L315.5 392.4L316.2 392.5L316.9 392.5L317.5 392.5L318.2 392.2L318.9 391.9L319.5 391.8L320.2 391.7L320.9 391.7L321.5 391.9L322.2 391.9L322.9 392L323.5 392L324.2 392.1L324.9 392L325.5 391.9L326.2 391.7L326.9 391.9L327.5 392L328.2 392L328.9 392.1L329.5 392.1L330.2 392.3L330.9 392.5L331.5 392.5L332.2 392.3L332.9 392.1L333.5 392L334.2 392L334.9 392.2L335.5 392.2L336.2 392.1L336.9 392.2L337.5 392.3L338.2 392.2L338.9 392.2L339.5 391.9L340.2 392L340.9 392L341.5 392L342.2 392.1L342.9 391.9L343.5 392L344.2 392L344.9 391.9L345.5 392L346.2 391.9L346.9 391.8L347.5 391.8L348.2 391.9L348.9 391.8L349.5 391.9L350.2 391.9L350.9 391.9L351.5 392.3L352.2 392.4L352.9 392.4L353.5 392.3L354.2 392.1L354.9 392L355.5 391.9L356.2 391.8L356.9 391.8L357.5 391.9L358.2 392L358.9 392.2L359.5 392L360.2 392.2L360.9 392.1L361.5 392L362.2 392.3L362.9 392.2L363.5 392.2L364.2 392.2L364.9 392.1L365.5 392.2L366.2 392.2L366.9 392.2L367.5 392.1L368.2 391.9L368.9 392.1L369.5 392L370.2 392L370.9 392L371.5 391.8L372.2 392L372.9 392L373.5 392.1L374.2 391.9L374.9 391.8L375.5 392L376.2 392L376.9 392.1L377.5 392.1L378.2 392.2L378.9 392.1L379.5 392.2L380.2 392.2L380.9 391.9L381.5 392.1L382.2 392.2L382.9 392.1L383.5 392.2L384.2 392.1L384.9 392L385.5 392L386.2 392L386.9 391.9L387.5 389.5L388.2 387.1L388.9 384.6L389.5 386.9L390.2 389.3L390.9 391.6L391.5 392.1L392.2 392.2L392.9 392.3L393.5 392.3L394.2 392.1L394.8 392L395.5 392L396.2 391.9L396.8 391.9L397.5 392.1L398.2 392.2L398.8 392.3L399.5 392.3L400.2 392.2L400.8 392.3L401.5 392.3L402.2 392.4L402.8 392.4L403.5 392.3L404.2 392.1L404.8 392L405.5 392L406.2 392L406.8 392L407.5 392L408.2 391.9L408.8 392L409.5 392.3L410.2 392.4L410.8 392.4L411.5 392.4L412.2 392.4L412.8 392.3L413.5 392.5L414.2 392.5L414.8 392.4L415.5 392.4L416.2 392.2L416.8 391.9L417.5 391.8L418.2 391.8L418.8 391.8L419.5 391.7L420.2 391.7L420.8 391.7L421.5 391.7L422.2 391.9L422.8 392.2L423.5 392.3L424.2 392.5L424.8 392.5L425.5 392.3L426.2 392.2L426.8 391.9L427.5 391.9L428.2 391.9L428.8 392L429.5 392L430.2 392L430.8 392L431.5 391.8L432.2 391.8L432.8 391.9L433.5 392L434.2 392L434.8 392L435.5 391.8L436.2 391.8L436.8 391.8L437.5 392.1L438.2 392L438.8 391.9L439.5 391.8L440.2 391.5L440.8 391.4L441.5 391.3L442.2 391.4L442.8 391.3L443.5 391.3L444.2 391.3L444.8 391.1L445.5 391.2L446.2 391.2L446.8 391.2L447.5 391.3L448.2 391.2L448.8 391.3L449.5 391.4L450.2 391.5L450.8 391.7L451.5 391.7L452.2 391.5L452.8 391.6L453.5 391.7L454.2 391.7L454.8 391.9L455.5 391.9L456.2 392L456.8 392.3L457.5 392.3L458.2 391.8L458.8 388.9L459.5 386.2L460.2 383.2L460.8 386.1L461.5 389L462.2 391.7L462.8 392L463.5 391.9L464.2 392.1L464.8 391.9L465.5 392L466.2 392.3L466.8 392.2L467.5 392.2L468.2 392L468.8 392L469.5 392L470.2 392.2L470.8 392.4L471.5 392.3L472.2 392.1L472.8 391.9L473.5 391.8L474.2 391.7L474.8 391.8L475.5 391.9L476.2 391.9L476.8 392L477.5 392.1L478.2 391.9L478.8 392L479.5 392.1L480.2 392L480.8 392.2L481.5 391.5L482.2 385L482.8 378.4L483.5 371.7L484.2 378.3L484.8 384.9L485.5 391.3L486.2 392L486.8 392L487.5 392L488.2 391.9L488.8 392L489.5 392L490.2 391.9L490.8 391.9L491.5 392L492.2 392L492.8 392.2L493.5 392.2L494.1 392.2L494.8 392.1L495.5 392.1L496.1 392.1L496.8 392L497.5 392L498.1 392L498.8 392.1L499.5 392.3L500.1 392.3L500.8 392.2L501.5 392.1L502.1 392L502.8 391.8L503.5 391.9L504.1 391.9L504.8 392L505.5 392.1L506.1 392L506.8 392.1L507.5 392.2L508.1 392L508.8 392.1L509.5 392.1L510.1 392.2L510.8 392.3L511.5 392.3L512.1 392.1L512.8 391.8L513.5 391.9L514.1 391.9L514.8 392.1L515.5 392.2L516.1 392L516.8 392.2L517.5 392L518.1 392L518.8 392.1L519.5 391.9L520.1 392L520.8 391.9L521.5 392L522.1 392.2L522.8 392.2L523.5 392.3L524.1 392.2L524.8 392.1L525.5 392.1L526.1 391.9L526.8 391.8L527.5 391.9L528.1 391.8L528.8 392L529.5 392L530.1 392.1L530.8 392.2L531.5 392.2L532.1 392.1L532.8 392L533.5 391.9L534.1 391.9L534.8 392L535.5 392L536.1 391.9L536.8 391.9L537.5 391.7L538.1 391.8L538.8 391.9L539.5 392L540.1 392.1L540.8 392.1L541.5 392.2L542.1 392.2L542.8 392.3V393.3H143.6Z" fill="#2f6350"/><path d="M143.6 392.2L144.3 392.3L144.9 392.3L145.6 392.3L146.3 392.5L146.9 392.4L147.6 392.4L148.3 392.4L148.9 392.4L149.6 392.2L150.3 390.8L150.9 389.4L151.6 388.1L152.3 389.5L152.9 390.9L153.6 392.3L154.3 392.4L154.9 392.4L155.6 392.4L156.3 392.4L156.9 392.5L157.6 392.5L158.3 392.4L158.9 392.3L159.6 392.3L160.3 392.4L160.9 392.6L161.6 392.6L162.3 392.7L162.9 392.5L163.6 392.4L164.3 392.4L164.9 392.4L165.6 392.5L166.3 392L166.9 389.6L167.6 387.2L168.3 384.8L168.9 387.3L169.6 389.7L170.3 392.1L170.9 392.4L171.6 392.3L172.3 392.3L172.9 392.3L173.6 392.3L174.3 392.3L174.9 392.1L175.6 392.2L176.3 392.3L176.9 392.1L177.6 392.3L178.3 392.3L178.9 392.4L179.6 392.5L180.3 392.7L180.9 392.7L181.6 392.6L182.3 392.4L182.9 392.3L183.6 392.3L184.3 392.2L184.9 392.2L185.6 392.2L186.3 392.2L186.9 392.3L187.6 392.3L188.3 392.3L188.9 392.3L189.6 392.1L190.3 392.1L190.9 392.2L191.6 392.2L192.3 392.4L192.9 392.5L193.6 392.5L194.2 392.5L194.9 392.3L195.6 392.1L196.2 392.2L196.9 392.2L197.6 392.4L198.2 392.5L198.9 392.4L199.6 392.2L200.2 392.2L200.9 392.4L201.6 392.4L202.2 392.4L202.9 392.4L203.6 392.3L204.2 392.3L204.9 392.4L205.6 392.4L206.2 392.4L206.9 392.5L207.6 392.4L208.2 392.4L208.9 392.4L209.6 392.4L210.2 392.4L210.9 392.4L211.6 392.4L212.2 392L212.9 389.8L213.6 387.5L214.2 385.2L214.9 387.6L215.6 389.8L216.2 392.3L216.9 392.6L217.6 392.5L218.2 392.5L218.9 392.2L219.6 392.2L220.2 392.2L220.9 392.1L221.6 392.3L222.2 392.4L222.9 392.3L223.6 392.3L224.2 392.5L224.9 392.4L225.6 392.5L226.2 392.6L226.9 392.4L227.6 392.4L228.2 392.3L228.9 392.3L229.6 392.4L230.2 392.3L230.9 392.4L231.6 392.4L232.2 392.5L232.9 392.6L233.6 392.5L234.2 392.4L234.9 392.4L235.6 392.4L236.2 392.3L236.9 392.4L237.6 392.4L238.2 392.3L238.9 392.5L239.6 392.5L240.2 392.4L240.9 392.3L241.6 392.3L242.2 392.2L242.9 392.2L243.6 392.3L244.2 392.3L244.9 392.4L245.6 392.4L246.2 392.3L246.9 392.4L247.6 392.4L248.2 392.4L248.9 392.5L249.6 392.4L250.2 392.4L250.9 392.3L251.6 392.2L252.2 392.1L252.9 392.2L253.6 392.2L254.2 392.4L254.9 392.4L255.6 392.4L256.2 392.2L256.9 392.3L257.6 392.2L258.2 392.2L258.9 392.2L259.6 392.1L260.2 392.1L260.9 392.3L261.6 392.5L262.2 392.6L262.9 392.7L263.6 392.6L264.2 392.7L264.9 392.6L265.6 392.5L266.2 392.4L266.9 392.3L267.6 392.2L268.2 392.2L268.9 392.3L269.6 392.3L270.2 392.5L270.9 392.6L271.6 392.5L272.2 392.5L272.9 392.3L273.6 392.1L274.2 392.1L274.9 392.1L275.6 392.2L276.2 392.4L276.9 392.4L277.6 392.4L278.2 392.3L278.9 392.4L279.6 392.3L280.2 392.2L280.9 392.1L281.6 392.1L282.2 392.3L282.9 392.5L283.6 392.6L284.2 392.7L284.9 392.7L285.6 392.6L286.2 392.7L286.9 392.5L287.6 392.3L288.2 392.3L288.9 392.2L289.6 392.3L290.2 392.4L290.9 392.5L291.6 392.6L292.2 392.6L292.9 392.5L293.5 392.6L294.2 392.6L294.9 392.4L295.5 392.5L296.2 392.4L296.9 392.3L297.5 392.4L298.2 392.3L298.9 392.3L299.5 392.5L300.2 392.3L300.9 392.4L301.5 392.3L302.2 392.3L302.9 392.5L303.5 392.5L304.2 392.6L304.9 392.5L305.5 392.5L306.2 392.4L306.9 392.5L307.5 392.5L308.2 392.4L308.9 392.4L309.5 392.2L310.2 392.2L310.9 392.2L311.5 392.2L312.2 392.4L312.9 392.4L313.5 392.4L314.2 392.4L314.9 392.4L315.5 392.6L316.2 392.7L316.9 392.7L317.5 392.7L318.2 392.4L318.9 392.2L319.5 392.1L320.2 392.1L320.9 392.1L321.5 392.2L322.2 392.2L322.9 392.2L323.5 392.3L324.2 392.3L324.9 392.3L325.5 392.2L326.2 392.1L326.9 392.2L327.5 392.3L328.2 392.3L328.9 392.4L329.5 392.4L330.2 392.5L330.9 392.7L331.5 392.7L332.2 392.5L332.9 392.3L333.5 392.3L334.2 392.2L334.9 392.4L335.5 392.4L336.2 392.4L336.9 392.5L337.5 392.5L338.2 392.5L338.9 392.4L339.5 392.2L340.2 392.3L340.9 392.3L341.5 392.3L342.2 392.3L342.9 392.2L343.5 392.3L344.2 392.2L344.9 392.2L345.5 392.3L346.2 392.2L346.9 392.1L347.5 392.1L348.2 392.2L348.9 392.1L349.5 392.2L350.2 392.2L350.9 392.2L351.5 392.5L352.2 392.6L352.9 392.6L353.5 392.5L354.2 392.4L354.9 392.2L355.5 392.2L356.2 392.2L356.9 392.2L357.5 392.2L358.2 392.3L358.9 392.4L359.5 392.3L360.2 392.4L360.9 392.4L361.5 392.3L362.2 392.5L362.9 392.4L363.5 392.4L364.2 392.4L364.9 392.3L365.5 392.5L366.2 392.4L366.9 392.4L367.5 392.4L368.2 392.2L368.9 392.3L369.5 392.3L370.2 392.3L370.9 392.3L371.5 392.1L372.2 392.2L372.9 392.3L373.5 392.3L374.2 392.2L374.9 392.2L375.5 392.3L376.2 392.3L376.9 392.4L377.5 392.4L378.2 392.5L378.9 392.3L379.5 392.4L380.2 392.4L380.9 392.2L381.5 392.4L382.2 392.5L382.9 392.4L383.5 392.4L384.2 392.4L384.9 392.3L385.5 392.3L386.2 392.2L386.9 392.1L387.5 390.2L388.2 388.5L388.9 386.5L389.5 388.3L390.2 390.1L390.9 391.9L391.5 392.4L392.2 392.4L392.9 392.5L393.5 392.5L394.2 392.4L394.8 392.3L395.5 392.3L396.2 392.2L396.8 392.2L397.5 392.4L398.2 392.4L398.8 392.5L399.5 392.5L400.2 392.5L400.8 392.5L401.5 392.5L402.2 392.6L402.8 392.6L403.5 392.5L404.2 392.3L404.8 392.3L405.5 392.3L406.2 392.3L406.8 392.3L407.5 392.2L408.2 392.2L408.8 392.3L409.5 392.5L410.2 392.6L410.8 392.6L411.5 392.6L412.2 392.6L412.8 392.5L413.5 392.7L414.2 392.7L414.8 392.6L415.5 392.6L416.2 392.4L416.8 392.2L417.5 392.1L418.2 392.1L418.8 392.1L419.5 392.1L420.2 392L420.8 392L421.5 392.1L422.2 392.2L422.8 392.4L423.5 392.5L424.2 392.6L424.8 392.7L425.5 392.5L426.2 392.5L426.8 392.2L427.5 392.2L428.2 392.2L428.8 392.2L429.5 392.3L430.2 392.3L430.8 392.2L431.5 392.1L432.2 392.1L432.8 392.2L433.5 392.2L434.2 392.3L434.8 392.2L435.5 392.1L436.2 392.1L436.8 392.1L437.5 392.3L438.2 392.3L438.8 392.1L439.5 392.1L440.2 391.8L440.8 391.7L441.5 391.6L442.2 391.7L442.8 391.6L443.5 391.6L444.2 391.5L444.8 391.4L445.5 391.5L446.2 391.5L446.8 391.5L447.5 391.6L448.2 391.5L448.8 391.6L449.5 391.7L450.2 391.7L450.8 391.9L451.5 391.9L452.2 391.8L452.8 391.8L453.5 391.9L454.2 391.9L454.8 392.1L455.5 392.1L456.2 392.3L456.8 392.5L457.5 392.5L458.2 392.1L458.8 389.8L459.5 387.7L460.2 385.5L460.8 387.7L461.5 389.8L462.2 392L462.8 392.3L463.5 392.2L464.2 392.3L464.8 392.2L465.5 392.3L466.2 392.5L466.8 392.5L467.5 392.4L468.2 392.3L468.8 392.3L469.5 392.3L470.2 392.4L470.8 392.6L471.5 392.5L472.2 392.4L472.8 392.2L473.5 392.1L474.2 392.1L474.8 392.1L475.5 392.2L476.2 392.2L476.8 392.3L477.5 392.4L478.2 392.2L478.8 392.3L479.5 392.3L480.2 392.3L480.8 392.4L481.5 391.7L482.2 386.7L482.8 381.9L483.5 376.9L484.2 381.8L484.8 386.6L485.5 391.5L486.2 392.2L486.8 392.3L487.5 392.3L488.2 392.2L488.8 392.2L489.5 392.2L490.2 392.2L490.8 392.2L491.5 392.2L492.2 392.3L492.8 392.5L493.5 392.4L494.1 392.4L494.8 392.3L495.5 392.3L496.1 392.4L496.8 392.2L497.5 392.3L498.1 392.3L498.8 392.4L499.5 392.5L500.1 392.5L500.8 392.4L501.5 392.4L502.1 392.3L502.8 392.1L503.5 392.2L504.1 392.2L504.8 392.2L505.5 392.3L506.1 392.3L506.8 392.3L507.5 392.4L508.1 392.3L508.8 392.3L509.5 392.4L510.1 392.4L510.8 392.5L511.5 392.5L512.1 392.4L512.8 392.1L513.5 392.2L514.1 392.2L514.8 392.3L515.5 392.4L516.1 392.3L516.8 392.4L517.5 392.3L518.1 392.3L518.8 392.4L519.5 392.2L520.1 392.3L520.8 392.2L521.5 392.3L522.1 392.4L522.8 392.4L523.5 392.5L524.1 392.5L524.8 392.4L525.5 392.3L526.1 392.2L526.8 392.1L527.5 392.2L528.1 392.1L528.8 392.3L529.5 392.3L530.1 392.3L530.8 392.4L531.5 392.5L532.1 392.4L532.8 392.3L533.5 392.2L534.1 392.2L534.8 392.3L535.5 392.3L536.1 392.2L536.8 392.2L537.5 392.1L538.1 392.1L538.8 392.2L539.5 392.3L540.1 392.3L540.8 392.3L541.5 392.4L542.1 392.4L542.8 392.5V393.3H143.6Z" fill="#233a70"/><g fill="none"><path d="M143.6 388.6L144.3 389L144.9 389L145.6 389.3L146.3 389.9L146.9 389.5L147.6 389.6L148.3 389.6L148.9 389.7L149.6 389.4L150.3 382.3L150.9 374L151.6 366.3L152.3 374.4L152.9 382.5L153.6 389.9L154.3 389.7L154.9 389.6L155.6 389.5L156.3 389.7L156.9 390.1L157.6 389.8L158.3 389.4L158.9 389.2L159.6 389L160.3 389L160.9 387.1L161.6 384.5L162.3 387.3L162.9 389.3L163.6 389.5L164.3 389.7L164.9 389.4L165.6 389.8L166.3 389.1L166.9 376.4L167.6 362.5L168.3 348.3L168.9 362.8L169.6 376.8L170.3 389.3L170.9 389.4L171.6 389.3L172.3 389.1L172.9 388.9L173.6 388.9L174.3 389.2L174.9 388.5L175.6 388.6L176.3 388.9L176.9 388.5L177.6 389.1L178.3 389.1L178.9 389.5L179.6 390.1L180.3 390.7L180.9 390.7L181.6 390.3L182.3 389.6L182.9 389.1L183.6 389L184.3 388.8L184.9 388.9L185.6 388.8L186.3 388.7L186.9 389L187.6 389.1L188.3 389L188.9 389.1L189.6 388.4L190.3 388.1L190.9 388.6L191.6 388.9L192.3 389.6L192.9 390.2L193.6 389.9L194.2 390L194.9 389.1L195.6 388.4L196.2 388.7L196.9 388.8L197.6 389.5L198.2 390L198.9 389.5L199.6 388.8L200.2 388.8L200.9 389.4L201.6 389.7L202.2 389.6L202.9 388.5L203.6 386.3L204.2 384.7L204.9 386.7L205.6 388.5L206.2 389.6L206.9 390.1L207.6 389.6L208.2 389.6L208.9 389.5L209.6 389.3L210.2 389.6L210.9 389.4L211.6 389.4L212.2 389.1L212.9 377.4L213.6 363.5L214.2 349.7L214.9 363.9L215.6 377.6L216.2 390.2L216.9 390.4L217.6 388.3L218.2 386.2L218.9 386.9L219.6 388.7L220.2 388.5L220.9 388.4L221.6 389.1L222.2 389.3L222.9 389.2L223.6 389.1L224.2 389.8L224.9 389.7L225.6 390.1L226.2 390.5L226.9 389.4L227.6 389.5L228.2 389.1L228.9 389.1L229.6 389.6L230.2 389.2L230.9 389.7L231.6 389.6L232.2 389.8L232.9 390.2L233.6 389.8L234.2 389.6L234.9 389.6L235.6 389.7L236.2 389.2L236.9 389.5L237.6 389.4L238.2 389L238.9 389.9L239.6 389.8L240.2 389.3L240.9 389.2L241.6 389L242.2 388.6L242.9 388.9L243.6 389.2L244.2 389.1L244.9 389.6L245.6 389.4L246.2 389.3L246.9 389.5L247.6 389.4L248.2 389.6L248.9 389.9L249.6 389.7L250.2 389.5L250.9 389.3L251.6 388.7L252.2 388.3L252.9 388.6L253.6 388.8L254.2 389.4L254.9 389.7L255.6 389.5L256.2 388.9L256.9 389L257.6 388.8L258.2 388.8L258.9 388.6L259.6 388.1L260.2 387.7L260.9 385.6L261.6 383.7L262.2 386.9L262.9 389.9L263.6 388.6L264.2 386.9L264.9 388.5L265.6 390L266.2 389.4L266.9 387.7L267.6 386L268.2 387.2L268.9 389.1L269.6 389.3L270.2 389.9L270.9 390.5L271.6 390L272.2 390L272.9 389.2L273.6 388.4L274.2 388.4L274.9 388.4L275.6 388.8L276.2 389.4L276.9 389.3L277.6 389.5L278.2 389.3L278.9 389.3L279.6 389.2L280.2 388.6L280.9 388.3L281.6 388.3L282.2 389L282.9 389.8L283.6 390.3L284.2 390.7L284.9 390.7L285.6 390.4L286.2 390.6L286.9 390L287.6 389L288.2 389L288.9 388.6L289.6 389.3L290.2 389.7L290.9 389.2L291.6 388.1L292.2 386.6L292.9 387.7L293.5 389.6L294.2 390.2L294.9 389.7L295.5 390.1L296.2 389.5L296.9 389.2L297.5 389.4L298.2 389.3L298.9 389.3L299.5 389.7L300.2 389.1L300.9 389.4L301.5 389.2L302.2 389.2L302.9 389.9L303.5 390L304.2 390.4L304.9 389.8L305.5 389.9L306.2 389.7L306.9 389.8L307.5 389.9L308.2 389.4L308.9 389.6L309.5 388.7L310.2 388.9L310.9 388.6L311.5 388.8L312.2 389.5L312.9 389.4L313.5 389.7L314.2 389.4L314.9 389.6L315.5 390.5L316.2 390.7L316.9 390.7L317.5 390.7L318.2 389.6L318.9 388.8L319.5 388.4L320.2 388.1L320.9 388.2L321.5 388.6L322.2 388.5L322.9 388.9L323.5 388.4L324.2 386.7L324.9 384.5L325.5 386.1L326.2 387.4L326.9 388.6L327.5 389L328.2 389.1L328.9 389.4L329.5 389.4L330.2 390L330.9 390.7L331.5 390.7L332.2 389.9L332.9 389.3L333.5 389.1L334.2 388.9L334.9 389.6L335.5 389.6L336.2 389.4L336.9 389.8L337.5 389.9L338.2 389.8L338.9 389.5L339.5 388.9L340.2 389L340.9 388.6L341.5 387.4L342.2 386.4L342.9 387.1L343.5 388.6L344.2 388.9L344.9 388.8L345.5 388.9L346.2 388.7L346.9 388.4L347.5 388.4L348.2 388.7L348.9 388.3L349.5 388.6L350.2 388.7L350.9 388.7L351.5 390L352.2 390.2L352.9 390.3L353.5 389.9L354.2 389.3L354.9 388.9L355.5 388.6L356.2 388.5L356.9 388.5L357.5 388.7L358.2 389L358.9 389.6L359.5 389.2L360.2 389.5L360.9 389.5L361.5 389.2L362.2 390.2L362.9 389.6L363.5 389.7L364.2 389.7L364.9 389.2L365.5 389.8L366.2 389.7L366.9 389.7L367.5 389.3L368.2 388.8L368.9 389.3L369.5 389L370.2 389.1L370.9 389L371.5 388.4L372.2 388.9L372.9 389L373.5 389.3L374.2 388.6L374.9 388.5L375.5 389L376.2 388.9L376.9 389.3L377.5 389.4L378.2 389.8L378.9 389.3L379.5 389.6L380.2 389.6L380.9 388.7L381.5 389.4L382.2 389.8L382.9 389.4L383.5 389.7L384.2 389.1L384.9 386.2L385.5 383.7L386.2 386.1L386.9 389L387.5 379.4L388.2 368.7L388.9 357.5L389.5 367.9L390.2 378.8L390.9 388.4L391.5 389.5L392.2 389.6L392.9 389.9L393.5 389L394.2 386.3L394.8 383.6L395.5 386L396.2 387.9L396.8 388.6L397.5 389.4L398.2 389.6L398.8 390L399.5 389.9L400.2 389.8L400.8 389.2L401.5 386.4L402.2 383.7L402.8 386.7L403.5 389.4L404.2 389.3L404.8 389.1L405.5 389.1L406.2 388.9L406.8 389L407.5 388.9L408.2 388.7L408.8 389.1L409.5 390L410.2 390.2L410.8 390.2L411.5 390.3L412.2 390.2L412.8 390.1L413.5 390.7L414.2 390.7L414.8 390.4L415.5 390.2L416.2 389.5L416.8 388.4L417.5 387.2L418.2 386.4L418.8 387.3L419.5 387.7L420.2 388.1L420.8 388.1L421.5 388.2L422.2 388.7L422.8 389.7L423.5 390.1L424.2 390.5L424.8 390.7L425.5 389.9L426.2 389.8L426.8 388.7L427.5 388.5L428.2 388.8L428.8 388.9L429.5 389.2L430.2 389.2L430.8 388.1L431.5 386.1L432.2 384.6L432.8 386.4L433.5 388.1L434.2 388.9L434.8 388.9L435.5 388.5L436.2 388.4L436.8 388.4L437.5 389.3L438.2 388.9L438.8 386.9L439.5 384.5L440.2 381.3L440.8 379.1L441.5 376.5L442.2 376.6L442.8 376.3L443.5 376.3L444.2 376.1L444.8 375.5L445.5 375.7L446.2 375.8L446.8 376L447.5 376.1L448.2 375.9L448.8 376.1L449.5 376.7L450.2 376.8L450.8 377.4L451.5 377.4L452.2 377L452.8 377.3L453.5 378.3L454.2 380.3L454.8 382.9L455.5 384.8L456.2 387.2L456.8 390L457.5 390L458.2 389.2L458.8 377.6L459.5 365L460.2 352L460.8 365L461.5 377.7L462.2 388.7L462.8 389.2L463.5 388.8L464.2 389.3L464.8 388.9L465.5 389L466.2 390L466.8 389.8L467.5 389.6L468.2 389.1L468.8 389L469.5 388.6L470.2 384.6L470.8 381L471.5 385.1L472.2 389L472.8 388.8L473.5 388.4L474.2 388.2L474.8 388.3L475.5 388.8L476.2 388.7L476.8 389.1L477.5 389.4L478.2 388.8L478.8 387.2L479.5 385.5L480.2 387.3L480.8 389.6L481.5 389.1L482.2 360.7L482.8 328.8L483.5 296.6L484.2 328.4L484.8 360.2L485.5 388.3L486.2 388.9L486.8 389.2L487.5 389.2L488.2 388.8L488.8 388.9L489.5 388.9L490.2 388.6L490.8 388.7L491.5 388.9L492.2 389.1L492.8 389.8L493.5 389.7L494.1 389.6L494.8 389.2L495.5 389.3L496.1 389.4L496.8 388.9L497.5 389.2L498.1 389.1L498.8 389.3L499.5 389.9L500.1 389.9L500.8 389.6L501.5 389.5L502.1 389.1L502.8 388.4L503.5 388.7L504.1 388.6L504.8 388.9L505.5 389.3L506.1 389.1L506.8 389.3L507.5 389.6L508.1 389.2L508.8 389.2L509.5 389.5L510.1 389.7L510.8 390.1L511.5 390L512.1 389.4L512.8 388.5L513.5 388.6L514.1 388.6L514.8 389.3L515.5 388.6L516.1 384.3L516.8 380.8L517.5 383.8L518.1 382.8L518.8 379L519.5 383.4L520.1 388.6L520.8 388.7L521.5 389.1L522.1 389.7L522.8 389.6L523.5 390L524.1 389.8L524.8 389.5L525.5 389.2L526.1 388.6L526.8 388.4L527.5 388.6L528.1 388.5L528.8 388.9L529.5 389.1L530.1 389.3L530.8 389.6L531.5 389.8L532.1 389.5L532.8 389L533.5 388.8L534.1 388.7L534.8 389.1L535.5 389.2L536.1 388.7L536.8 388.6L537.5 388.1L538.1 388.3L538.8 388.6L539.5 389.2L540.1 389.3L540.8 389.3L541.5 389.7L542.1 389.6L542.8 389.9" stroke="#c98a3c" stroke-width=".45"/><path d="M143.6 392.2L144.3 392.3L144.9 392.3L145.6 392.3L146.3 392.5L146.9 392.4L147.6 392.4L148.3 392.4L148.9 392.4L149.6 392.2L150.3 390.8L150.9 389.4L151.6 388.1L152.3 389.5L152.9 390.9L153.6 392.3L154.3 392.4L154.9 392.4L155.6 392.4L156.3 392.4L156.9 392.5L157.6 392.5L158.3 392.4L158.9 392.3L159.6 392.3L160.3 392.4L160.9 392.6L161.6 392.6L162.3 392.7L162.9 392.5L163.6 392.4L164.3 392.4L164.9 392.4L165.6 392.5L166.3 392L166.9 389.6L167.6 387.2L168.3 384.8L168.9 387.3L169.6 389.7L170.3 392.1L170.9 392.4L171.6 392.3L172.3 392.3L172.9 392.3L173.6 392.3L174.3 392.3L174.9 392.1L175.6 392.2L176.3 392.3L176.9 392.1L177.6 392.3L178.3 392.3L178.9 392.4L179.6 392.5L180.3 392.7L180.9 392.7L181.6 392.6L182.3 392.4L182.9 392.3L183.6 392.3L184.3 392.2L184.9 392.2L185.6 392.2L186.3 392.2L186.9 392.3L187.6 392.3L188.3 392.3L188.9 392.3L189.6 392.1L190.3 392.1L190.9 392.2L191.6 392.2L192.3 392.4L192.9 392.5L193.6 392.5L194.2 392.5L194.9 392.3L195.6 392.1L196.2 392.2L196.9 392.2L197.6 392.4L198.2 392.5L198.9 392.4L199.6 392.2L200.2 392.2L200.9 392.4L201.6 392.4L202.2 392.4L202.9 392.4L203.6 392.3L204.2 392.3L204.9 392.4L205.6 392.4L206.2 392.4L206.9 392.5L207.6 392.4L208.2 392.4L208.9 392.4L209.6 392.4L210.2 392.4L210.9 392.4L211.6 392.4L212.2 392L212.9 389.8L213.6 387.5L214.2 385.2L214.9 387.6L215.6 389.8L216.2 392.3L216.9 392.6L217.6 392.5L218.2 392.5L218.9 392.2L219.6 392.2L220.2 392.2L220.9 392.1L221.6 392.3L222.2 392.4L222.9 392.3L223.6 392.3L224.2 392.5L224.9 392.4L225.6 392.5L226.2 392.6L226.9 392.4L227.6 392.4L228.2 392.3L228.9 392.3L229.6 392.4L230.2 392.3L230.9 392.4L231.6 392.4L232.2 392.5L232.9 392.6L233.6 392.5L234.2 392.4L234.9 392.4L235.6 392.4L236.2 392.3L236.9 392.4L237.6 392.4L238.2 392.3L238.9 392.5L239.6 392.5L240.2 392.4L240.9 392.3L241.6 392.3L242.2 392.2L242.9 392.2L243.6 392.3L244.2 392.3L244.9 392.4L245.6 392.4L246.2 392.3L246.9 392.4L247.6 392.4L248.2 392.4L248.9 392.5L249.6 392.4L250.2 392.4L250.9 392.3L251.6 392.2L252.2 392.1L252.9 392.2L253.6 392.2L254.2 392.4L254.9 392.4L255.6 392.4L256.2 392.2L256.9 392.3L257.6 392.2L258.2 392.2L258.9 392.2L259.6 392.1L260.2 392.1L260.9 392.3L261.6 392.5L262.2 392.6L262.9 392.7L263.6 392.6L264.2 392.7L264.9 392.6L265.6 392.5L266.2 392.4L266.9 392.3L267.6 392.2L268.2 392.2L268.9 392.3L269.6 392.3L270.2 392.5L270.9 392.6L271.6 392.5L272.2 392.5L272.9 392.3L273.6 392.1L274.2 392.1L274.9 392.1L275.6 392.2L276.2 392.4L276.9 392.4L277.6 392.4L278.2 392.3L278.9 392.4L279.6 392.3L280.2 392.2L280.9 392.1L281.6 392.1L282.2 392.3L282.9 392.5L283.6 392.6L284.2 392.7L284.9 392.7L285.6 392.6L286.2 392.7L286.9 392.5L287.6 392.3L288.2 392.3L288.9 392.2L289.6 392.3L290.2 392.4L290.9 392.5L291.6 392.6L292.2 392.6L292.9 392.5L293.5 392.6L294.2 392.6L294.9 392.4L295.5 392.5L296.2 392.4L296.9 392.3L297.5 392.4L298.2 392.3L298.9 392.3L299.5 392.5L300.2 392.3L300.9 392.4L301.5 392.3L302.2 392.3L302.9 392.5L303.5 392.5L304.2 392.6L304.9 392.5L305.5 392.5L306.2 392.4L306.9 392.5L307.5 392.5L308.2 392.4L308.9 392.4L309.5 392.2L310.2 392.2L310.9 392.2L311.5 392.2L312.2 392.4L312.9 392.4L313.5 392.4L314.2 392.4L314.9 392.4L315.5 392.6L316.2 392.7L316.9 392.7L317.5 392.7L318.2 392.4L318.9 392.2L319.5 392.1L320.2 392.1L320.9 392.1L321.5 392.2L322.2 392.2L322.9 392.2L323.5 392.3L324.2 392.3L324.9 392.3L325.5 392.2L326.2 392.1L326.9 392.2L327.5 392.3L328.2 392.3L328.9 392.4L329.5 392.4L330.2 392.5L330.9 392.7L331.5 392.7L332.2 392.5L332.9 392.3L333.5 392.3L334.2 392.2L334.9 392.4L335.5 392.4L336.2 392.4L336.9 392.5L337.5 392.5L338.2 392.5L338.9 392.4L339.5 392.2L340.2 392.3L340.9 392.3L341.5 392.3L342.2 392.3L342.9 392.2L343.5 392.3L344.2 392.2L344.9 392.2L345.5 392.3L346.2 392.2L346.9 392.1L347.5 392.1L348.2 392.2L348.9 392.1L349.5 392.2L350.2 392.2L350.9 392.2L351.5 392.5L352.2 392.6L352.9 392.6L353.5 392.5L354.2 392.4L354.9 392.2L355.5 392.2L356.2 392.2L356.9 392.2L357.5 392.2L358.2 392.3L358.9 392.4L359.5 392.3L360.2 392.4L360.9 392.4L361.5 392.3L362.2 392.5L362.9 392.4L363.5 392.4L364.2 392.4L364.9 392.3L365.5 392.5L366.2 392.4L366.9 392.4L367.5 392.4L368.2 392.2L368.9 392.3L369.5 392.3L370.2 392.3L370.9 392.3L371.5 392.1L372.2 392.2L372.9 392.3L373.5 392.3L374.2 392.2L374.9 392.2L375.5 392.3L376.2 392.3L376.9 392.4L377.5 392.4L378.2 392.5L378.9 392.3L379.5 392.4L380.2 392.4L380.9 392.2L381.5 392.4L382.2 392.5L382.9 392.4L383.5 392.4L384.2 392.4L384.9 392.3L385.5 392.3L386.2 392.2L386.9 392.1L387.5 390.2L388.2 388.5L388.9 386.5L389.5 388.3L390.2 390.1L390.9 391.9L391.5 392.4L392.2 392.4L392.9 392.5L393.5 392.5L394.2 392.4L394.8 392.3L395.5 392.3L396.2 392.2L396.8 392.2L397.5 392.4L398.2 392.4L398.8 392.5L399.5 392.5L400.2 392.5L400.8 392.5L401.5 392.5L402.2 392.6L402.8 392.6L403.5 392.5L404.2 392.3L404.8 392.3L405.5 392.3L406.2 392.3L406.8 392.3L407.5 392.2L408.2 392.2L408.8 392.3L409.5 392.5L410.2 392.6L410.8 392.6L411.5 392.6L412.2 392.6L412.8 392.5L413.5 392.7L414.2 392.7L414.8 392.6L415.5 392.6L416.2 392.4L416.8 392.2L417.5 392.1L418.2 392.1L418.8 392.1L419.5 392.1L420.2 392L420.8 392L421.5 392.1L422.2 392.2L422.8 392.4L423.5 392.5L424.2 392.6L424.8 392.7L425.5 392.5L426.2 392.5L426.8 392.2L427.5 392.2L428.2 392.2L428.8 392.2L429.5 392.3L430.2 392.3L430.8 392.2L431.5 392.1L432.2 392.1L432.8 392.2L433.5 392.2L434.2 392.3L434.8 392.2L435.5 392.1L436.2 392.1L436.8 392.1L437.5 392.3L438.2 392.3L438.8 392.1L439.5 392.1L440.2 391.8L440.8 391.7L441.5 391.6L442.2 391.7L442.8 391.6L443.5 391.6L444.2 391.5L444.8 391.4L445.5 391.5L446.2 391.5L446.8 391.5L447.5 391.6L448.2 391.5L448.8 391.6L449.5 391.7L450.2 391.7L450.8 391.9L451.5 391.9L452.2 391.8L452.8 391.8L453.5 391.9L454.2 391.9L454.8 392.1L455.5 392.1L456.2 392.3L456.8 392.5L457.5 392.5L458.2 392.1L458.8 389.8L459.5 387.7L460.2 385.5L460.8 387.7L461.5 389.8L462.2 392L462.8 392.3L463.5 392.2L464.2 392.3L464.8 392.2L465.5 392.3L466.2 392.5L466.8 392.5L467.5 392.4L468.2 392.3L468.8 392.3L469.5 392.3L470.2 392.4L470.8 392.6L471.5 392.5L472.2 392.4L472.8 392.2L473.5 392.1L474.2 392.1L474.8 392.1L475.5 392.2L476.2 392.2L476.8 392.3L477.5 392.4L478.2 392.2L478.8 392.3L479.5 392.3L480.2 392.3L480.8 392.4L481.5 391.7L482.2 386.7L482.8 381.9L483.5 376.9L484.2 381.8L484.8 386.6L485.5 391.5L486.2 392.2L486.8 392.3L487.5 392.3L488.2 392.2L488.8 392.2L489.5 392.2L490.2 392.2L490.8 392.2L491.5 392.2L492.2 392.3L492.8 392.5L493.5 392.4L494.1 392.4L494.8 392.3L495.5 392.3L496.1 392.4L496.8 392.2L497.5 392.3L498.1 392.3L498.8 392.4L499.5 392.5L500.1 392.5L500.8 392.4L501.5 392.4L502.1 392.3L502.8 392.1L503.5 392.2L504.1 392.2L504.8 392.2L505.5 392.3L506.1 392.3L506.8 392.3L507.5 392.4L508.1 392.3L508.8 392.3L509.5 392.4L510.1 392.4L510.8 392.5L511.5 392.5L512.1 392.4L512.8 392.1L513.5 392.2L514.1 392.2L514.8 392.3L515.5 392.4L516.1 392.3L516.8 392.4L517.5 392.3L518.1 392.3L518.8 392.4L519.5 392.2L520.1 392.3L520.8 392.2L521.5 392.3L522.1 392.4L522.8 392.4L523.5 392.5L524.1 392.5L524.8 392.4L525.5 392.3L526.1 392.2L526.8 392.1L527.5 392.2L528.1 392.1L528.8 392.3L529.5 392.3L530.1 392.3L530.8 392.4L531.5 392.5L532.1 392.4L532.8 392.3L533.5 392.2L534.1 392.2L534.8 392.3L535.5 392.3L536.1 392.2L536.8 392.2L537.5 392.1L538.1 392.1L538.8 392.2L539.5 392.3L540.1 392.3L540.8 392.3L541.5 392.4L542.1 392.4L542.8 392.5" stroke="#3c66b8" stroke-width=".4"/><path d="M143.6 388.2L144.3 388.6L144.9 388.6L145.6 389L146.3 389.6L146.9 389.2L147.6 389.3L148.3 389.3L148.9 389.4L149.6 389.1L150.3 381.4L150.9 372.5L151.6 364.2L152.3 372.9L152.9 381.6L153.6 389.6L154.3 389.4L154.9 389.3L155.6 389.2L156.3 389.4L156.9 389.8L157.6 389.5L158.3 389L158.9 388.8L159.6 388.6L160.3 388.6L160.9 386.8L161.6 384.2L162.3 387.1L162.9 389L163.6 389.1L164.3 389.4L164.9 389.1L165.6 389.5L166.3 388.8L166.9 375.1L167.6 360.2L168.3 344.9L168.9 360.5L169.6 375.6L170.3 389L170.9 389L171.6 389L172.3 388.7L172.9 388.5L173.6 388.6L174.3 388.9L174.9 388L175.6 388.2L176.3 388.6L176.9 388L177.6 388.7L178.3 388.8L178.9 389.1L179.6 389.8L180.3 390.5L180.9 390.5L181.6 390L182.3 389.3L182.9 388.7L183.6 388.7L184.3 388.4L184.9 388.5L185.6 388.4L186.3 388.3L186.9 388.6L187.6 388.7L188.3 388.6L188.9 388.8L189.6 388L190.3 387.7L190.9 388.2L191.6 388.5L192.3 389.3L192.9 389.9L193.6 389.6L194.2 389.7L194.9 388.8L195.6 388L196.2 388.3L196.9 388.4L197.6 389.2L198.2 389.8L198.9 389.1L199.6 388.4L200.2 388.4L200.9 389.1L201.6 389.3L202.2 389.3L202.9 388.2L203.6 385.9L204.2 384.4L204.9 386.3L205.6 388.2L206.2 389.3L206.9 389.8L207.6 389.3L208.2 389.2L208.9 389.2L209.6 389L210.2 389.3L210.9 389.1L211.6 389.1L212.2 388.7L212.9 376.2L213.6 361.2L214.2 346.4L214.9 361.7L215.6 376.4L216.2 390L216.9 390.2L217.6 388L218.2 385.9L218.9 386.5L219.6 388.4L220.2 388.1L220.9 387.9L221.6 388.8L222.2 389L222.9 388.8L223.6 388.7L224.2 389.5L224.9 389.4L225.6 389.8L226.2 390.3L226.9 389L227.6 389.1L228.2 388.8L228.9 388.8L229.6 389.3L230.2 388.9L230.9 389.4L231.6 389.2L232.2 389.4L232.9 389.9L233.6 389.5L234.2 389.3L234.9 389.3L235.6 389.4L236.2 388.8L236.9 389.2L237.6 389.1L238.2 388.6L238.9 389.6L239.6 389.5L240.2 389L240.9 388.8L241.6 388.7L242.2 388.2L242.9 388.5L243.6 388.8L244.2 388.8L244.9 389.3L245.6 389.1L246.2 388.9L246.9 389.2L247.6 389L248.2 389.3L248.9 389.6L249.6 389.4L250.2 389.1L250.9 388.9L251.6 388.4L252.2 387.8L252.9 388.2L253.6 388.4L254.2 389L254.9 389.4L255.6 389.1L256.2 388.5L256.9 388.6L257.6 388.5L258.2 388.4L258.9 388.1L259.6 387.7L260.2 387.3L260.9 385.3L261.6 383.4L262.2 386.6L262.9 389.7L263.6 388.4L264.2 386.7L264.9 388.3L265.6 389.7L266.2 389.1L266.9 387.3L267.6 385.6L268.2 386.8L268.9 388.8L269.6 389L270.2 389.6L270.9 390.3L271.6 389.7L272.2 389.7L272.9 388.9L273.6 388L274.2 387.9L274.9 387.9L275.6 388.4L276.2 389L276.9 389L277.6 389.1L278.2 388.9L278.9 389L279.6 388.9L280.2 388.2L280.9 387.9L281.6 387.9L282.2 388.6L282.9 389.5L283.6 390.1L284.2 390.5L284.9 390.5L285.6 390.1L286.2 390.4L286.9 389.7L287.6 388.7L288.2 388.6L288.9 388.2L289.6 388.9L290.2 389.4L290.9 388.9L291.6 387.8L292.2 386.3L292.9 387.5L293.5 389.3L294.2 390L294.9 389.4L295.5 389.8L296.2 389.2L296.9 388.8L297.5 389.1L298.2 388.9L298.9 389L299.5 389.4L300.2 388.7L300.9 389L301.5 388.8L302.2 388.8L302.9 389.6L303.5 389.7L304.2 390.2L304.9 389.5L305.5 389.6L306.2 389.4L306.9 389.5L307.5 389.6L308.2 389.1L308.9 389.3L309.5 388.3L310.2 388.5L310.9 388.2L311.5 388.4L312.2 389.1L312.9 389.1L313.5 389.4L314.2 389.1L314.9 389.3L315.5 390.2L316.2 390.5L316.9 390.5L317.5 390.5L318.2 389.3L318.9 388.4L319.5 388L320.2 387.6L320.9 387.7L321.5 388.1L322.2 388.1L322.9 388.5L323.5 388.1L324.2 386.3L324.9 384.2L325.5 385.7L326.2 386.9L326.9 388.1L327.5 388.6L328.2 388.7L328.9 389L329.5 389L330.2 389.7L330.9 390.4L331.5 390.5L332.2 389.6L332.9 389L333.5 388.7L334.2 388.5L334.9 389.3L335.5 389.3L336.2 389.1L336.9 389.5L337.5 389.6L338.2 389.4L338.9 389.2L339.5 388.5L340.2 388.6L340.9 388.2L341.5 387L342.2 386.1L342.9 386.6L343.5 388.2L344.2 388.5L344.9 388.4L345.5 388.5L346.2 388.3L346.9 387.9L347.5 388L348.2 388.3L348.9 387.8L349.5 388.2L350.2 388.2L350.9 388.3L351.5 389.7L352.2 389.9L352.9 390L353.5 389.6L354.2 389L354.9 388.5L355.5 388.2L356.2 388.1L356.9 388.1L357.5 388.3L358.2 388.7L358.9 389.2L359.5 388.8L360.2 389.2L360.9 389.2L361.5 388.8L362.2 389.9L362.9 389.3L363.5 389.4L364.2 389.4L364.9 388.8L365.5 389.5L366.2 389.4L366.9 389.4L367.5 389L368.2 388.4L368.9 389L369.5 388.7L370.2 388.7L370.9 388.6L371.5 388L372.2 388.5L372.9 388.6L373.5 388.9L374.2 388.2L374.9 388.1L375.5 388.6L376.2 388.6L376.9 389L377.5 389.1L378.2 389.5L378.9 389L379.5 389.3L380.2 389.3L380.9 388.3L381.5 389L382.2 389.5L382.9 389.1L383.5 389.4L384.2 388.7L384.9 385.8L385.5 383.3L386.2 385.7L386.9 388.7L387.5 378.4L388.2 366.9L388.9 354.7L389.5 366L390.2 377.7L390.9 388L391.5 389.2L392.2 389.3L392.9 389.6L393.5 388.7L394.2 386L394.8 383.2L395.5 385.7L396.2 387.5L396.8 388.2L397.5 389L398.2 389.3L398.8 389.7L399.5 389.6L400.2 389.5L400.8 388.9L401.5 386.1L402.2 383.5L402.8 386.4L403.5 389.1L404.2 389L404.8 388.7L405.5 388.7L406.2 388.5L406.8 388.6L407.5 388.5L408.2 388.3L408.8 388.7L409.5 389.7L410.2 390L410.8 390L411.5 390.1L412.2 389.9L412.8 389.9L413.5 390.5L414.2 390.5L414.8 390.1L415.5 390L416.2 389.2L416.8 388L417.5 386.8L418.2 385.9L418.8 386.8L419.5 387.2L420.2 387.6L420.8 387.6L421.5 387.8L422.2 388.3L422.8 389.4L423.5 389.8L424.2 390.3L424.8 390.5L425.5 389.6L426.2 389.5L426.8 388.3L427.5 388.1L428.2 388.4L428.8 388.5L429.5 388.8L430.2 388.8L430.8 387.7L431.5 385.6L432.2 384.2L432.8 386L433.5 387.7L434.2 388.6L434.8 388.5L435.5 388.1L436.2 387.9L436.8 388L437.5 388.9L438.2 388.6L438.8 386.5L439.5 384.1L440.2 380.9L440.8 378.7L441.5 376.1L442.2 376.3L442.8 375.9L443.5 376L444.2 375.7L444.8 375.1L445.5 375.3L446.2 375.4L446.8 375.6L447.5 375.8L448.2 375.5L448.8 375.8L449.5 376.3L450.2 376.5L450.8 377.1L451.5 377.2L452.2 376.7L452.8 377L453.5 378L454.2 379.9L454.8 382.6L455.5 384.5L456.2 386.9L456.8 389.7L457.5 389.7L458.2 388.9L458.8 376.4L459.5 362.8L460.2 348.9L460.8 362.8L461.5 376.5L462.2 388.3L462.8 388.8L463.5 388.5L464.2 388.9L464.8 388.5L465.5 388.7L466.2 389.7L466.8 389.5L467.5 389.3L468.2 388.8L468.8 388.6L469.5 388.2L470.2 384.3L470.8 380.8L471.5 384.8L472.2 388.7L472.8 388.4L473.5 388L474.2 387.7L474.8 387.9L475.5 388.4L476.2 388.3L476.8 388.8L477.5 389L478.2 388.4L478.8 386.8L479.5 385.2L480.2 386.9L480.8 389.2L481.5 388.8L482.2 358.3L482.8 324L483.5 289.3L484.2 323.5L484.8 357.8L485.5 388L486.2 388.5L486.8 388.8L487.5 388.8L488.2 388.4L488.8 388.5L489.5 388.5L490.2 388.2L490.8 388.3L491.5 388.5L492.2 388.8L492.8 389.5L493.5 389.4L494.1 389.3L494.8 388.8L495.5 388.9L496.1 389.1L496.8 388.5L497.5 388.8L498.1 388.7L498.8 389L499.5 389.6L500.1 389.6L500.8 389.2L501.5 389.1L502.1 388.7L502.8 387.9L503.5 388.3L504.1 388.2L504.8 388.5L505.5 389L506.1 388.8L506.8 389L507.5 389.3L508.1 388.8L508.8 388.9L509.5 389.2L510.1 389.4L510.8 389.8L511.5 389.7L512.1 389L512.8 388.1L513.5 388.2L514.1 388.2L514.8 388.9L515.5 388.2L516.1 383.9L516.8 380.4L517.5 383.4L518.1 382.4L518.8 378.7L519.5 383L520.1 388.2L520.8 388.3L521.5 388.7L522.1 389.4L522.8 389.3L523.5 389.7L524.1 389.5L524.8 389.1L525.5 388.9L526.1 388.2L526.8 388L527.5 388.2L528.1 388.1L528.8 388.5L529.5 388.7L530.1 389L530.8 389.3L531.5 389.4L532.1 389.1L532.8 388.7L533.5 388.5L534.1 388.3L534.8 388.7L535.5 388.8L536.1 388.3L536.8 388.2L537.5 387.6L538.1 387.8L538.8 388.2L539.5 388.8L540.1 388.9L540.8 389L541.5 389.4L542.1 389.3L542.8 389.6" stroke="#c47fd6" stroke-width=".55"/></g><path d="M143.6 281.1V393.3H542.8M142.2 393.3H143.6M142.2 365.1H143.6M142.2 336.9H143.6M142.2 308.7H143.6M142.2 280.5H143.6M149.2 393.3v1.300M164.5 393.3v1.300M179.8 393.3v1.300M195.1 393.3v1.300M209 393.3v1.300M224.3 393.3v1.300M239.6 393.3v1.300M254.9 393.3v1.300M271.6 393.3v1.300M288.3 393.3v1.300M304.9 393.3v1.300M320.2 393.3v1.300M335.5 393.3v1.300M352.2 393.3v1.300M368.9 393.3v1.300M385.6 393.3v1.300M402.3 393.3v1.300M419 393.3v1.300M435.7 393.3v1.300M452.4 393.3v1.300M467.7 393.3v1.300M483 393.3v1.300M496.9 393.3v1.300M512.2 393.3v1.300M527.5 393.3v1.300M542.8 393.3v1.300" fill="none" stroke="#3a4352" stroke-width=".5"/><g class="tk"><text x="141.2" y="396" text-anchor="end">0</text><text x="141.2" y="367" text-anchor="end">9</text><text x="141.2" y="339" text-anchor="end">18</text><text x="141.2" y="311" text-anchor="end">27</text><text x="141.2" y="286" text-anchor="end">36</text><text x="149.2" y="400" text-anchor="middle">15:40</text><text x="164.5" y="400" text-anchor="middle">16:35</text><text x="179.8" y="400" text-anchor="middle">17:30</text><text x="195.1" y="400" text-anchor="middle">18:25</text><text x="209" y="400" text-anchor="middle">19:15</text><text x="224.3" y="400" text-anchor="middle">20:10</text><text x="239.6" y="400" text-anchor="middle">21:05</text><text x="254.9" y="400" text-anchor="middle">22:00</text><text x="271.6" y="400" text-anchor="middle">23:00</text><text x="288.3" y="400" text-anchor="middle">00:00</text><text x="304.9" y="400" text-anchor="middle">01:00</text><text x="320.2" y="400" text-anchor="middle">01:55</text><text x="335.5" y="400" text-anchor="middle">02:50</text><text x="352.2" y="400" text-anchor="middle">03:50</text><text x="368.9" y="400" text-anchor="middle">04:50</text><text x="385.6" y="400" text-anchor="middle">05:50</text><text x="402.3" y="400" text-anchor="middle">06:50</text><text x="419" y="400" text-anchor="middle">07:50</text><text x="435.7" y="400" text-anchor="middle">08:50</text><text x="452.4" y="400" text-anchor="middle">09:50</text><text x="467.7" y="400" text-anchor="middle">10:45</text><text x="483" y="400" text-anchor="middle">11:40</text><text x="496.9" y="400" text-anchor="middle">12:30</text><text x="512.2" y="400" text-anchor="middle">13:25</text><text x="527.5" y="400" text-anchor="middle">14:20</text><text x="542.8" y="400" text-anchor="middle">15:15</text></g><text class="ax" transform="translate(125.3 337.1) rotate(-90)" text-anchor="middle">all service units</text></svg></section>
<section class="panel" style="left:552px;top:269px;width:411px;height:151px"><header class="ph"><h2 class="tx" style="font-weight:400;top:3px;font-size:6.3px;left:4.1px;color:#e9ecf1">PING</h2><svg class="abs" style="left:398.9px;top:4.8px" width="7" height="3" viewBox="0 0 7 3"><circle cx="1.5" cy="1.5" r="0.7" fill="#e6e9ee"/><circle cx="3.5" cy="1.5" r="0.7" fill="#e6e9ee"/><circle cx="5.5" cy="1.5" r="0.7" fill="#e6e9ee"/></svg></header><svg class="abs" style="left:0px;top:0px" width="411" height="151" viewBox="552 269 411 151"><path d="M576.4 375.9H956.3" stroke="#222a37" stroke-width=".5"/><path d="M576.4 344H956.3" stroke="#222a37" stroke-width=".5"/><path d="M576.4 312.1H956.3" stroke="#222a37" stroke-width=".5"/><path d="M576.4 381.1C576.7 381.8 577.5 386.4 578.4 385.3C579.3 384.2 580.9 375.2 581.9 374.7C582.9 374.1 583.1 380.5 584.2 382.1C585.3 383.7 587.5 384.9 588.6 384.2C589.7 383.5 590.2 377.7 590.9 377.9C591.6 378 592.1 385.1 592.9 385.3C593.7 385.5 595.1 379.8 595.8 378.9C596.6 378 596.7 382.6 597.3 380C597.9 377.3 598.6 362.8 599.3 363C600 363.2 600.8 378 601.6 381.1C602.5 384.1 603.6 380.5 604.5 381.1C605.5 381.6 606.6 383.7 607.4 384.2C608.3 384.8 608.8 386.4 609.5 384.2C610.1 382.1 610.7 372.6 611.2 371.5C611.7 370.4 611.9 381.6 612.4 377.9C612.9 374.1 613.5 349 614.1 349.2C614.8 349.4 615.3 374.7 616.2 378.9C617 383.2 618.3 374.7 619.1 374.7C619.8 374.7 620 380.9 620.5 378.9C621 377 621.7 364.1 622.3 363C622.8 361.9 623.4 374 624 372.6C624.6 371.1 625.1 355.4 625.7 354.5C626.4 353.6 627 362.6 627.8 367.2C628.6 371.8 629.8 382.5 630.7 382.1C631.6 381.8 632.2 365.1 633 365.1C633.8 365.1 634.8 378.9 635.6 382.1C636.4 385.3 637.1 383.9 637.9 384.2C638.8 384.6 640.1 384.8 640.8 384.2C641.6 383.7 641.6 380.7 642.3 381.1C643 381.4 644.4 385.3 645.2 386.4C646 387.4 646.5 388.3 647.2 387.4C648 386.5 648.9 384.8 649.6 381.1C650.2 377.3 650.6 368.4 651 365.1C651.4 361.8 651.5 361.9 651.9 361.4C652.2 360.9 652.4 361.8 653 361.9C653.7 362.1 655.3 362.3 655.9 362.5C656.6 362.6 656.8 362.2 657.1 363C657.5 363.8 657.5 364.2 658 367.2C658.4 370.3 659.2 378.7 659.7 381.1C660.3 383.4 660.5 379.5 661.2 381.1C661.8 382.6 662.8 389.4 663.5 390.6C664.2 391.8 664.9 391.5 665.5 388.5C666.2 385.5 667 373.8 667.6 372.6C668.1 371.3 668.4 393.6 669 381.1C669.6 368.5 670.4 296.6 671.1 297.2C671.7 297.7 672.5 368.8 673.1 384.2C673.7 399.6 674 391.3 674.8 389.5C675.7 387.8 677.2 375.2 678 373.6C678.9 372 679.5 380.3 680.1 380C680.6 379.6 680.9 371.7 681.5 371.5C682.1 371.3 683 376.4 683.8 378.9C684.7 381.4 685.8 385.1 686.4 386.4C687.1 387.6 687.4 392.2 687.9 386.4C688.4 380.5 689 352 689.6 351.3C690.3 350.6 691.2 381.4 692 382.1C692.7 382.8 693.5 357.2 694.3 355.6C695.1 354 695.7 367.1 696.6 372.6C697.5 378 698.8 389.2 699.8 388.5C700.8 387.8 701.9 371 702.7 368.3C703.5 365.7 703.8 376.6 704.5 372.6C705.1 368.5 706.2 347.8 706.8 343.9C707.3 340 707.2 352.9 707.6 349.2C708.1 345.5 708.7 318 709.4 321.6C710.1 325.1 711.1 368.3 711.7 370.4C712.3 372.6 712.4 331.7 713.2 334.3C713.9 337 715.5 379.1 716.4 386.4C717.2 393.6 717.5 378.7 718.1 377.9C718.7 377 719.4 382.5 720.1 381.1C720.9 379.6 721.8 370.3 722.5 369.4C723.1 368.5 723.5 376.4 724.2 375.7C724.9 375 725.8 365.5 726.5 365.1C727.3 364.8 727.8 374 728.6 373.6C729.3 373.3 730.1 361.4 730.9 363C731.7 364.6 732.6 384.8 733.2 383.2C733.8 381.6 734.1 355.6 734.7 353.4C735.2 351.3 735.8 370.3 736.4 370.4C737 370.6 737.8 353.6 738.4 354.5C739.1 355.4 739.8 371.7 740.5 375.7C741.1 379.8 741.9 378 742.5 378.9C743.1 379.8 743.5 382.1 744 381.1C744.4 380 744.8 372.4 745.4 372.6C746 372.7 746.7 383.9 747.4 382.1C748.2 380.3 749.4 364.8 750.1 361.9C750.7 359.1 750.7 369.4 751.2 365.1C751.7 360.9 752.3 334.7 753 336.4C753.6 338.2 754.3 382.8 755 375.7C755.7 368.7 756.3 293.1 757 294C757.8 294.9 758.5 375.6 759.3 381.1C760.2 386.5 761.4 327.8 762.3 326.9C763.3 326 764 372.4 764.9 375.7C765.9 379.1 767 348.8 767.8 347.1C768.7 345.3 769.4 362.8 770.2 365.1C770.9 367.4 771.5 358 772.2 360.9C772.9 363.7 773.7 382.3 774.5 382.1C775.3 381.9 776.1 360 776.8 359.8C777.6 359.6 778.3 380.7 779.2 381.1C780 381.4 781 364.1 781.8 361.9C782.6 359.8 783.1 365.7 783.8 368.3C784.5 371 785.5 377.2 786.1 377.9C786.8 378.6 787.3 371.8 787.9 372.6C788.5 373.3 789.3 381.4 789.9 382.1C790.5 382.8 791 375.9 791.7 376.8C792.3 377.7 793 388 793.7 387.4C794.4 386.9 795 374.5 795.7 373.6C796.4 372.7 797.1 381.4 797.8 382.1C798.4 382.8 798.9 377.9 799.5 377.9C800.1 377.9 800.6 385.3 801.2 382.1C801.9 378.9 802.8 359.3 803.6 358.7C804.3 358.2 805.1 377.2 805.9 378.9C806.7 380.7 807.6 370.6 808.2 369.4C808.8 368.1 809.1 372.2 809.7 371.5C810.2 370.8 811 363.9 811.7 365.1C812.4 366.4 813.3 376.3 814 378.9C814.7 381.6 815 379.8 815.8 381.1C816.5 382.3 817.7 389 818.7 386.4C819.6 383.7 820.6 365.5 821.6 365.1C822.5 364.8 823.4 389.9 824.5 384.2C825.6 378.6 827.2 332.9 828.3 331.1C829.3 329.4 829.9 368.5 830.6 373.6C831.3 378.7 831.9 361.9 832.6 361.9C833.3 361.9 834.1 375.4 834.9 373.6C835.8 371.8 837 352 837.8 351.3C838.7 350.6 839.3 365.3 840.2 369.4C841 373.4 841.9 374.9 842.8 375.7C843.7 376.6 844.8 376.1 845.7 374.7C846.6 373.3 847.2 364.9 848 367.2C848.8 369.5 849.8 389.2 850.6 388.5C851.4 387.8 852.2 366 852.7 363C853.1 360 853 374 853.5 370.4C854 366.9 854.8 339.3 855.6 341.8C856.3 344.2 857.5 378.1 858.2 385.3C858.8 392.5 856.9 384.9 859.3 384.8C861.8 384.7 870.1 386.3 872.7 384.8C875.3 383.3 874.3 376 875 375.7C875.7 375.5 876.3 383.9 877 383.2C877.8 382.5 878.8 371.3 879.7 371.5C880.5 371.7 881.2 381.6 882 384.2C882.8 386.9 883.5 388.8 884.3 387.4C885.1 386 885.9 376.3 886.6 375.7C887.4 375.2 888 383 888.7 384.2C889.3 385.5 890 382.5 890.7 383.2C891.4 383.9 892.2 387.8 893 388.5C893.9 389.2 895 390.1 895.9 387.4C896.8 384.8 897.7 372 898.5 372.6C899.4 373.1 900 389.4 900.9 390.6C901.7 391.8 902.9 383.5 903.8 380C904.7 376.4 905.6 368.3 906.4 369.4C907.2 370.4 908.1 383.9 908.7 386.4C909.3 388.8 909.7 383.9 910.2 384.2C910.6 384.6 911.1 388.3 911.6 388.5C912.1 388.7 912.7 388 913.4 385.3C914 382.6 915 372.9 915.7 372.6C916.3 372.2 916.6 382.8 917.1 383.2C917.6 383.5 918 374.5 918.6 374.7C919.2 374.9 919.9 385.7 920.6 384.2C921.3 382.8 921.9 365.5 922.6 366.2C923.4 366.9 924.3 384.6 925 388.5C925.7 392.4 926 392.4 926.7 389.5C927.4 386.7 928.3 372 929 371.5C929.8 371 930.6 385.1 931.4 386.4C932.1 387.6 933.1 379.3 933.7 378.9C934.3 378.6 934.7 384.9 935.1 384.2C935.6 383.5 936 374.1 936.6 374.7C937.2 375.2 938.2 385.8 938.9 387.4C939.6 389 940.1 384.2 940.7 384.2C941.2 384.2 941.8 387.6 942.4 387.4C943 387.2 943.6 383.4 944.1 383.2C944.7 383 945.3 387.2 945.9 386.4C946.5 385.5 947 380.2 947.6 377.9C948.2 375.6 948.8 372.7 949.4 372.6C950 372.4 950.6 375.9 951.1 376.8C951.6 377.7 951.8 376.3 952.3 377.9C952.8 379.5 953.5 386.2 954 386.4C954.5 386.5 954.8 378.9 955.2 378.9C955.6 378.9 956.1 385.1 956.3 386.4V407.6H576.4Z" fill="#233a70"/><path d="M576.4 381.1C576.7 381.8 577.5 386.4 578.4 385.3C579.3 384.2 580.9 375.2 581.9 374.7C582.9 374.1 583.1 380.5 584.2 382.1C585.3 383.7 587.5 384.9 588.6 384.2C589.7 383.5 590.2 377.7 590.9 377.9C591.6 378 592.1 385.1 592.9 385.3C593.7 385.5 595.1 379.8 595.8 378.9C596.6 378 596.7 382.6 597.3 380C597.9 377.3 598.6 362.8 599.3 363C600 363.2 600.8 378 601.6 381.1C602.5 384.1 603.6 380.5 604.5 381.1C605.5 381.6 606.6 383.7 607.4 384.2C608.3 384.8 608.8 386.4 609.5 384.2C610.1 382.1 610.7 372.6 611.2 371.5C611.7 370.4 611.9 381.6 612.4 377.9C612.9 374.1 613.5 349 614.1 349.2C614.8 349.4 615.3 374.7 616.2 378.9C617 383.2 618.3 374.7 619.1 374.7C619.8 374.7 620 380.9 620.5 378.9C621 377 621.7 364.1 622.3 363C622.8 361.9 623.4 374 624 372.6C624.6 371.1 625.1 355.4 625.7 354.5C626.4 353.6 627 362.6 627.8 367.2C628.6 371.8 629.8 382.5 630.7 382.1C631.6 381.8 632.2 365.1 633 365.1C633.8 365.1 634.8 378.9 635.6 382.1C636.4 385.3 637.1 383.9 637.9 384.2C638.8 384.6 640.1 384.8 640.8 384.2C641.6 383.7 641.6 380.7 642.3 381.1C643 381.4 644.4 385.3 645.2 386.4C646 387.4 646.5 388.3 647.2 387.4C648 386.5 648.9 384.8 649.6 381.1C650.2 377.3 650.6 368.4 651 365.1C651.4 361.8 651.5 361.9 651.9 361.4C652.2 360.9 652.4 361.8 653 361.9C653.7 362.1 655.3 362.3 655.9 362.5C656.6 362.6 656.8 362.2 657.1 363C657.5 363.8 657.5 364.2 658 367.2C658.4 370.3 659.2 378.7 659.7 381.1C660.3 383.4 660.5 379.5 661.2 381.1C661.8 382.6 662.8 389.4 663.5 390.6C664.2 391.8 664.9 391.5 665.5 388.5C666.2 385.5 667 373.8 667.6 372.6C668.1 371.3 668.4 393.6 669 381.1C669.6 368.5 670.4 296.6 671.1 297.2C671.7 297.7 672.5 368.8 673.1 384.2C673.7 399.6 674 391.3 674.8 389.5C675.7 387.8 677.2 375.2 678 373.6C678.9 372 679.5 380.3 680.1 380C680.6 379.6 680.9 371.7 681.5 371.5C682.1 371.3 683 376.4 683.8 378.9C684.7 381.4 685.8 385.1 686.4 386.4C687.1 387.6 687.4 392.2 687.9 386.4C688.4 380.5 689 352 689.6 351.3C690.3 350.6 691.2 381.4 692 382.1C692.7 382.8 693.5 357.2 694.3 355.6C695.1 354 695.7 367.1 696.6 372.6C697.5 378 698.8 389.2 699.8 388.5C700.8 387.8 701.9 371 702.7 368.3C703.5 365.7 703.8 376.6 704.5 372.6C705.1 368.5 706.2 347.8 706.8 343.9C707.3 340 707.2 352.9 707.6 349.2C708.1 345.5 708.7 318 709.4 321.6C710.1 325.1 711.1 368.3 711.7 370.4C712.3 372.6 712.4 331.7 713.2 334.3C713.9 337 715.5 379.1 716.4 386.4C717.2 393.6 717.5 378.7 718.1 377.9C718.7 377 719.4 382.5 720.1 381.1C720.9 379.6 721.8 370.3 722.5 369.4C723.1 368.5 723.5 376.4 724.2 375.7C724.9 375 725.8 365.5 726.5 365.1C727.3 364.8 727.8 374 728.6 373.6C729.3 373.3 730.1 361.4 730.9 363C731.7 364.6 732.6 384.8 733.2 383.2C733.8 381.6 734.1 355.6 734.7 353.4C735.2 351.3 735.8 370.3 736.4 370.4C737 370.6 737.8 353.6 738.4 354.5C739.1 355.4 739.8 371.7 740.5 375.7C741.1 379.8 741.9 378 742.5 378.9C743.1 379.8 743.5 382.1 744 381.1C744.4 380 744.8 372.4 745.4 372.6C746 372.7 746.7 383.9 747.4 382.1C748.2 380.3 749.4 364.8 750.1 361.9C750.7 359.1 750.7 369.4 751.2 365.1C751.7 360.9 752.3 334.7 753 336.4C753.6 338.2 754.3 382.8 755 375.7C755.7 368.7 756.3 293.1 757 294C757.8 294.9 758.5 375.6 759.3 381.1C760.2 386.5 761.4 327.8 762.3 326.9C763.3 326 764 372.4 764.9 375.7C765.9 379.1 767 348.8 767.8 347.1C768.7 345.3 769.4 362.8 770.2 365.1C770.9 367.4 771.5 358 772.2 360.9C772.9 363.7 773.7 382.3 774.5 382.1C775.3 381.9 776.1 360 776.8 359.8C777.6 359.6 778.3 380.7 779.2 381.1C780 381.4 781 364.1 781.8 361.9C782.6 359.8 783.1 365.7 783.8 368.3C784.5 371 785.5 377.2 786.1 377.9C786.8 378.6 787.3 371.8 787.9 372.6C788.5 373.3 789.3 381.4 789.9 382.1C790.5 382.8 791 375.9 791.7 376.8C792.3 377.7 793 388 793.7 387.4C794.4 386.9 795 374.5 795.7 373.6C796.4 372.7 797.1 381.4 797.8 382.1C798.4 382.8 798.9 377.9 799.5 377.9C800.1 377.9 800.6 385.3 801.2 382.1C801.9 378.9 802.8 359.3 803.6 358.7C804.3 358.2 805.1 377.2 805.9 378.9C806.7 380.7 807.6 370.6 808.2 369.4C808.8 368.1 809.1 372.2 809.7 371.5C810.2 370.8 811 363.9 811.7 365.1C812.4 366.4 813.3 376.3 814 378.9C814.7 381.6 815 379.8 815.8 381.1C816.5 382.3 817.7 389 818.7 386.4C819.6 383.7 820.6 365.5 821.6 365.1C822.5 364.8 823.4 389.9 824.5 384.2C825.6 378.6 827.2 332.9 828.3 331.1C829.3 329.4 829.9 368.5 830.6 373.6C831.3 378.7 831.9 361.9 832.6 361.9C833.3 361.9 834.1 375.4 834.9 373.6C835.8 371.8 837 352 837.8 351.3C838.7 350.6 839.3 365.3 840.2 369.4C841 373.4 841.9 374.9 842.8 375.7C843.7 376.6 844.8 376.1 845.7 374.7C846.6 373.3 847.2 364.9 848 367.2C848.8 369.5 849.8 389.2 850.6 388.5C851.4 387.8 852.2 366 852.7 363C853.1 360 853 374 853.5 370.4C854 366.9 854.8 339.3 855.6 341.8C856.3 344.2 857.5 378.1 858.2 385.3C858.8 392.5 856.9 384.9 859.3 384.8C861.8 384.7 870.1 386.3 872.7 384.8C875.3 383.3 874.3 376 875 375.7C875.7 375.5 876.3 383.9 877 383.2C877.8 382.5 878.8 371.3 879.7 371.5C880.5 371.7 881.2 381.6 882 384.2C882.8 386.9 883.5 388.8 884.3 387.4C885.1 386 885.9 376.3 886.6 375.7C887.4 375.2 888 383 888.7 384.2C889.3 385.5 890 382.5 890.7 383.2C891.4 383.9 892.2 387.8 893 388.5C893.9 389.2 895 390.1 895.9 387.4C896.8 384.8 897.7 372 898.5 372.6C899.4 373.1 900 389.4 900.9 390.6C901.7 391.8 902.9 383.5 903.8 380C904.7 376.4 905.6 368.3 906.4 369.4C907.2 370.4 908.1 383.9 908.7 386.4C909.3 388.8 909.7 383.9 910.2 384.2C910.6 384.6 911.1 388.3 911.6 388.5C912.1 388.7 912.7 388 913.4 385.3C914 382.6 915 372.9 915.7 372.6C916.3 372.2 916.6 382.8 917.1 383.2C917.6 383.5 918 374.5 918.6 374.7C919.2 374.9 919.9 385.7 920.6 384.2C921.3 382.8 921.9 365.5 922.6 366.2C923.4 366.9 924.3 384.6 925 388.5C925.7 392.4 926 392.4 926.7 389.5C927.4 386.7 928.3 372 929 371.5C929.8 371 930.6 385.1 931.4 386.4C932.1 387.6 933.1 379.3 933.7 378.9C934.3 378.6 934.7 384.9 935.1 384.2C935.6 383.5 936 374.1 936.6 374.7C937.2 375.2 938.2 385.8 938.9 387.4C939.6 389 940.1 384.2 940.7 384.2C941.2 384.2 941.8 387.6 942.4 387.4C943 387.2 943.6 383.4 944.1 383.2C944.7 383 945.3 387.2 945.9 386.4C946.5 385.5 947 380.2 947.6 377.9C948.2 375.6 948.8 372.7 949.4 372.6C950 372.4 950.6 375.9 951.1 376.8C951.6 377.7 951.8 376.3 952.3 377.9C952.8 379.5 953.5 386.2 954 386.4C954.5 386.5 954.8 378.9 955.2 378.9C955.6 378.9 956.1 385.1 956.3 386.4" fill="none" stroke="#5ea78c" stroke-width=".6"/><path d="M576.4 281.1V407.6H956.3M575 407.6H576.4M575 375.9H576.4M575 344H576.4M575 312.1H576.4M575 280.3H576.4M585.7 407.6v1.300M600.2 407.6v1.300M614.8 407.6v1.300M629.3 407.6v1.300M643.9 407.6v1.300M659.8 407.6v1.300M675.7 407.6v1.300M691.6 407.6v1.300M707.4 407.6v1.300M723.3 407.6v1.300M739.2 407.6v1.300M755.1 407.6v1.300M771 407.6v1.300M786.9 407.6v1.300M802.8 407.6v1.300M820 407.6v1.300M835.8 407.6v1.300M851.7 407.6v1.300M867.6 407.6v1.300M883.5 407.6v1.300M898.1 407.6v1.300M912.6 407.6v1.300M927.2 407.6v1.300M941.7 407.6v1.300M956.3 407.6v1.300" fill="none" stroke="#3a4352" stroke-width=".5"/><g class="tk"><text x="574" y="410" text-anchor="end">0</text><text x="574" y="378" text-anchor="end">0.3</text><text x="574" y="346" text-anchor="end">0.6</text><text x="574" y="314" text-anchor="end">0.9</text><text x="574" y="286" text-anchor="end">1.2</text><text x="585.7" y="415" text-anchor="middle">15:55</text><text x="600.2" y="415" text-anchor="middle">16:50</text><text x="614.8" y="415" text-anchor="middle">17:45</text><text x="629.3" y="415" text-anchor="middle">18:40</text><text x="643.9" y="415" text-anchor="middle">19:35</text><text x="659.8" y="415" text-anchor="middle">20:35</text><text x="675.7" y="415" text-anchor="middle">21:35</text><text x="691.6" y="415" text-anchor="middle">22:35</text><text x="707.4" y="415" text-anchor="middle">23:35</text><text x="723.3" y="415" text-anchor="middle">00:35</text><text x="739.2" y="415" text-anchor="middle">01:35</text><text x="755.1" y="415" text-anchor="middle">02:35</text><text x="771" y="415" text-anchor="middle">03:35</text><text x="786.9" y="415" text-anchor="middle">04:35</text><text x="802.8" y="415" text-anchor="middle">05:35</text><text x="820" y="415" text-anchor="middle">06:40</text><text x="835.8" y="415" text-anchor="middle">07:40</text><text x="851.7" y="415" text-anchor="middle">08:40</text><text x="867.6" y="415" text-anchor="middle">09:40</text><text x="883.5" y="415" text-anchor="middle">10:40</text><text x="898.1" y="415" text-anchor="middle">11:35</text><text x="912.6" y="415" text-anchor="middle">12:30</text><text x="927.2" y="415" text-anchor="middle">13:25</text><text x="941.7" y="415" text-anchor="middle">14:20</text><text x="956.3" y="415" text-anchor="middle">15:15</text></g><text class="ax" transform="translate(558.3 344.2) rotate(-90)" text-anchor="middle">all service units</text></svg></section>
<section class="panel" style="left:119px;top:410px;width:223px;height:109px"><header class="ph"><h2 class="tx" style="font-weight:400;top:3px;font-size:6.3px;left:4px;color:#e9ecf1">Memory</h2><svg class="abs" style="left:211.2px;top:4.1px" width="7" height="3" viewBox="0 0 7 3"><circle cx="1.5" cy="1.5" r="0.7" fill="#e6e9ee"/><circle cx="3.5" cy="1.5" r="0.7" fill="#e6e9ee"/><circle cx="5.5" cy="1.5" r="0.7" fill="#e6e9ee"/></svg></header><svg class="abs" style="left:0px;top:0px" width="223" height="109" viewBox="119 410 223 109"><path d="M143.6 484.4H335.7" stroke="#222a37" stroke-width=".5"/><path d="M143.6 463.1H335.7" stroke="#222a37" stroke-width=".5"/><path d="M143.6 441.9H335.7" stroke="#222a37" stroke-width=".5"/><path d="M143.6 430.9L144.4 433.7L145.3 432.9L146.1 430.4L147 431.5L147.8 431.8L148.6 433.6L149.5 430.2L150.3 430.9L151.1 431.3L152 433.4L152.8 431.6L153.7 431L154.5 432.7L155.3 432.6L156.2 432.9L157 431.8L157.9 432.8L158.7 432.9L159.5 434.2L160.4 434.5L161.2 431.7L162.1 431.1L162.9 431.9L163.7 431.3L164.6 433.5L165.4 433L166.2 432.6L167.1 433.3L167.9 431.3L168.8 434.6L169.6 433.9L170.4 433.7L171.3 434.1L172.1 432.5L173 435.6L173.8 432.3L174.6 432.6L175.5 433.2L176.3 432.1L177.2 431L178 433.4L178.8 432.8L179.7 433.2L180.5 433L181.3 434.2L182.2 434.4L183 433L183.9 434.2L184.7 432.6L185.5 432.8L186.4 434.1L187.2 433.3L188.1 433.6L188.9 433.8L189.7 432.4L190.6 433.6L191.4 433.4L192.3 435.8L193.1 433L193.9 435.3L194.8 434.1L195.6 432L196.4 431.8L197.3 434.2L198.1 435.1L199 433.3L199.8 434.2L200.6 433.4L201.5 435.2L202.3 432.6L203.2 432.1L204 435.4L204.8 434.6L205.7 434.6L206.5 433L207.4 436L208.2 433.6L209 434.1L209.9 434.7L210.7 432.7L211.5 435.2L212.4 434.2L213.2 433.1L214.1 431.1L214.9 431.8L215.7 432.3L216.6 430.9L217.4 431.9L218.3 432.1L219.1 431.7L219.9 431L220.8 428.4L221.6 432.6L222.5 431.1L223.3 431.5L224.1 431.6L225 429.7L225.8 430.5L226.6 430.6L227.5 431.8L228.3 432.2L229.2 431L230 431.6L230.8 431.9L231.7 430.5L232.5 432.6L233.4 432.1L234.2 430.4L235 431.3L235.9 430.5L236.7 432.2L237.6 430.5L238.4 432L239.2 429.7L240.1 430.3L240.9 430.7L241.7 429.5L242.6 430.8L243.4 431.9L244.3 429.5L245.1 430.8L245.9 429.8L246.8 431L247.6 429.9L248.5 432.1L249.3 432.5L250.1 432.7L251 430.3L251.8 433.3L252.7 433.1L253.5 432.7L254.3 430.8L255.2 430.6L256 432L256.8 430.2L257.7 430.7L258.5 429.7L259.4 430L260.2 431.8L261 430.8L261.9 431.2L262.7 430.4L263.6 430.7L264.4 430.9L265.2 430.1L266.1 430.8L266.9 430L267.8 430.7L268.6 430.9L269.4 429.7L270.3 429.6L271.1 429.3L271.9 429.9L272.8 430.8L273.6 430.3L274.5 430.3L275.3 432.4L276.1 431.7L277 428.7L277.8 430.4L278.7 433.4L279.5 430.4L280.3 430.1L281.2 431.6L282 427.7L282.9 429L283.7 429.3L284.5 430.3L285.4 429.6L286.2 429.1L287 429.5L287.9 430.7L288.7 429.8L289.6 429.8L290.4 429.6L291.2 431L292.1 429.5L292.9 429.8L293.8 429.5L294.6 429.5L295.4 431.3L296.3 428.8L297.1 428.8L298 431.1L298.8 429.7L299.6 430.5L300.5 430L301.3 428.5L302.1 429L303 427.4L303.8 429.5L304.7 430.8L305.5 437L306.3 446.5L307.2 440.4L308 440.6L308.9 439L309.7 438.2L310.5 439.5L311.4 438.8L312.2 439.6L313.1 439.4L313.9 438.7L314.7 440.4L315.6 437.5L316.4 440.3L317.2 437.9L318.1 439.1L318.9 439.4L319.8 437.3L320.6 437.2L321.4 437.2L322.3 436.7L323.1 437L324 436L324.8 437L325.6 436.6L326.5 435.5L327.3 438.2L328.2 437.5L329 437.7L329.8 437.9L330.7 438.6L331.5 437.5L332.3 437.1L333.2 437.5L334 439.2L334.9 436.8L335.7 436.8V505.6H143.6Z" fill="#664a2f"/><path d="M143.6 430.9L144.4 433.7L145.3 432.9L146.1 430.4L147 431.5L147.8 431.8L148.6 433.6L149.5 430.2L150.3 430.9L151.1 431.3L152 433.4L152.8 431.6L153.7 431L154.5 432.7L155.3 432.6L156.2 432.9L157 431.8L157.9 432.8L158.7 432.9L159.5 434.2L160.4 434.5L161.2 431.7L162.1 431.1L162.9 431.9L163.7 431.3L164.6 433.5L165.4 433L166.2 432.6L167.1 433.3L167.9 431.3L168.8 434.6L169.6 433.9L170.4 433.7L171.3 434.1L172.1 432.5L173 435.6L173.8 432.3L174.6 432.6L175.5 433.2L176.3 432.1L177.2 431L178 433.4L178.8 432.8L179.7 433.2L180.5 433L181.3 434.2L182.2 434.4L183 433L183.9 434.2L184.7 432.6L185.5 432.8L186.4 434.1L187.2 433.3L188.1 433.6L188.9 433.8L189.7 432.4L190.6 433.6L191.4 433.4L192.3 435.8L193.1 433L193.9 435.3L194.8 434.1L195.6 432L196.4 431.8L197.3 434.2L198.1 435.1L199 433.3L199.8 434.2L200.6 433.4L201.5 435.2L202.3 432.6L203.2 432.1L204 435.4L204.8 434.6L205.7 434.6L206.5 433L207.4 436L208.2 433.6L209 434.1L209.9 434.7L210.7 432.7L211.5 435.2L212.4 434.2L213.2 433.1L214.1 431.1L214.9 431.8L215.7 432.3L216.6 430.9L217.4 431.9L218.3 432.1L219.1 431.7L219.9 431L220.8 428.4L221.6 432.6L222.5 431.1L223.3 431.5L224.1 431.6L225 429.7L225.8 430.5L226.6 430.6L227.5 431.8L228.3 432.2L229.2 431L230 431.6L230.8 431.9L231.7 430.5L232.5 432.6L233.4 432.1L234.2 430.4L235 431.3L235.9 430.5L236.7 432.2L237.6 430.5L238.4 432L239.2 429.7L240.1 430.3L240.9 430.7L241.7 429.5L242.6 430.8L243.4 431.9L244.3 429.5L245.1 430.8L245.9 429.8L246.8 431L247.6 429.9L248.5 432.1L249.3 432.5L250.1 432.7L251 430.3L251.8 433.3L252.7 433.1L253.5 432.7L254.3 430.8L255.2 430.6L256 432L256.8 430.2L257.7 430.7L258.5 429.7L259.4 430L260.2 431.8L261 430.8L261.9 431.2L262.7 430.4L263.6 430.7L264.4 430.9L265.2 430.1L266.1 430.8L266.9 430L267.8 430.7L268.6 430.9L269.4 429.7L270.3 429.6L271.1 429.3L271.9 429.9L272.8 430.8L273.6 430.3L274.5 430.3L275.3 432.4L276.1 431.7L277 428.7L277.8 430.4L278.7 433.4L279.5 430.4L280.3 430.1L281.2 431.6L282 427.7L282.9 429L283.7 429.3L284.5 430.3L285.4 429.6L286.2 429.1L287 429.5L287.9 430.7L288.7 429.8L289.6 429.8L290.4 429.6L291.2 431L292.1 429.5L292.9 429.8L293.8 429.5L294.6 429.5L295.4 431.3L296.3 428.8L297.1 428.8L298 431.1L298.8 429.7L299.6 430.5L300.5 430L301.3 428.5L302.1 429L303 427.4L303.8 429.5L304.7 430.8L305.5 437L306.3 446.5L307.2 440.4L308 440.6L308.9 439L309.7 438.2L310.5 439.5L311.4 438.8L312.2 439.6L313.1 439.4L313.9 438.7L314.7 440.4L315.6 437.5L316.4 440.3L317.2 437.9L318.1 439.1L318.9 439.4L319.8 437.3L320.6 437.2L321.4 437.2L322.3 436.7L323.1 437L324 436L324.8 437L325.6 436.6L326.5 435.5L327.3 438.2L328.2 437.5L329 437.7L329.8 437.9L330.7 438.6L331.5 437.5L332.3 437.1L333.2 437.5L334 439.2L334.9 436.8L335.7 436.8" fill="none" stroke="#c98a3c" stroke-width=".55"/><path d="M143.6 421.4V505.6H335.7M142.2 505.6H143.6M142.2 484.4H143.6M142.2 463.1H143.6M142.2 441.9H143.6M142.2 420.6H143.6M152.3 505.6v1.300M166.4 505.6v1.300M181.1 505.6v1.300M197.1 505.6v1.300M213.2 505.6v1.300M228.6 505.6v1.300M244 505.6v1.300M260.1 505.6v1.300M276.1 505.6v1.300M292.2 505.6v1.300M306.9 505.6v1.300M321 505.6v1.300M335.7 505.6v1.300" fill="none" stroke="#3a4352" stroke-width=".5"/><g class="tk"><text x="141.2" y="508" text-anchor="end">0</text><text x="141.2" y="487" text-anchor="end">350</text><text x="141.2" y="465" text-anchor="end">700</text><text x="141.2" y="444" text-anchor="end">1050</text><text x="141.2" y="427" text-anchor="end">1400</text><text x="152.3" y="512" text-anchor="middle">16:25</text><text x="166.4" y="512" text-anchor="middle">18:10</text><text x="181.1" y="512" text-anchor="middle">20:00</text><text x="197.1" y="512" text-anchor="middle">22:00</text><text x="213.2" y="512" text-anchor="middle">00:00</text><text x="228.6" y="512" text-anchor="middle">01:55</text><text x="244" y="512" text-anchor="middle">03:50</text><text x="260.1" y="512" text-anchor="middle">05:50</text><text x="276.1" y="512" text-anchor="middle">07:50</text><text x="292.2" y="512" text-anchor="middle">09:50</text><text x="306.9" y="512" text-anchor="middle">11:40</text><text x="321" y="512" text-anchor="middle">13:25</text><text x="335.7" y="512" text-anchor="middle">15:15</text></g><text class="ax" transform="translate(125.4 463.4) rotate(-90)" text-anchor="middle">MB</text></svg></section>
<section class="panel" style="left:345px;top:410px;width:204px;height:109px"><header class="ph"><h2 class="tx" style="font-weight:400;top:3px;font-size:6.3px;left:3.9px;color:#e9ecf1">Root Partition</h2><svg class="abs" style="left:191.6px;top:4.1px" width="7" height="3" viewBox="0 0 7 3"><circle cx="1.5" cy="1.5" r="0.7" fill="#e6e9ee"/><circle cx="3.5" cy="1.5" r="0.7" fill="#e6e9ee"/><circle cx="5.5" cy="1.5" r="0.7" fill="#e6e9ee"/></svg></header><svg class="abs" style="left:0px;top:0px" width="204" height="109" viewBox="345 410 204 109"><path d="M369.4 484.4H542.7" stroke="#222a37" stroke-width=".5"/><path d="M369.4 463.1H542.7" stroke="#222a37" stroke-width=".5"/><path d="M369.4 441.9H542.7" stroke="#222a37" stroke-width=".5"/><path d="M369.4 435.1L395 434.9L412 434.3L430 434L452 434.2L455 433.4L481 433.3L483 434.2L513 434L515 433.9L542.7 433.9V505.6H369.4Z" fill="#22386d"/><path d="M369.4 435.1L395 434.9L412 434.3L430 434L452 434.2L455 433.4L481 433.3L483 434.2L513 434L515 433.9L542.7 433.9" fill="none" stroke="#2f4c8c" stroke-width=".5"/><path d="M369.4 421.4V505.6H542.7M368 505.6H369.4M368 484.4H369.4M368 463.1H369.4M368 441.9H369.4M368 420.6H369.4M369.4 505.6v1.300M383.9 505.6v1.300M398.4 505.6v1.300M412.3 505.6v1.300M426.8 505.6v1.300M441.3 505.6v1.300M455.7 505.6v1.300M470.2 505.6v1.300M484.7 505.6v1.300M500.4 505.6v1.300M514.9 505.6v1.300M528.2 505.6v1.300M542.7 505.6v1.300" fill="none" stroke="#3a4352" stroke-width=".5"/><g class="tk"><text x="367" y="508" text-anchor="end">0</text><text x="367" y="487" text-anchor="end">2000</text><text x="367" y="465" text-anchor="end">4000</text><text x="367" y="444" text-anchor="end">6000</text><text x="367" y="426" text-anchor="end">8000</text><text x="369.4" y="512" text-anchor="middle">15:20</text><text x="383.9" y="512" text-anchor="middle">17:20</text><text x="398.4" y="512" text-anchor="middle">19:20</text><text x="412.3" y="512" text-anchor="middle">21:15</text><text x="426.8" y="512" text-anchor="middle">23:15</text><text x="441.3" y="512" text-anchor="middle">01:15</text><text x="455.7" y="512" text-anchor="middle">03:15</text><text x="470.2" y="512" text-anchor="middle">05:15</text><text x="484.7" y="512" text-anchor="middle">07:15</text><text x="500.4" y="512" text-anchor="middle">09:25</text><text x="514.9" y="512" text-anchor="middle">11:25</text><text x="528.2" y="512" text-anchor="middle">13:15</text><text x="542.7" y="512" text-anchor="middle">15:15</text></g><text class="ax" transform="translate(351.2 463.4) rotate(-90)" text-anchor="middle">MiB</text></svg></section>
<section class="panel" style="left:552px;top:424px;width:185px;height:109px"><header class="ph"><h2 class="tx" style="font-weight:400;top:3px;font-size:6.3px;left:4.1px;color:#e9ecf1">Update</h2><svg class="abs" style="left:173.2px;top:4.1px" width="7" height="3" viewBox="0 0 7 3"><circle cx="1.5" cy="1.5" r="0.7" fill="#e6e9ee"/><circle cx="3.5" cy="1.5" r="0.7" fill="#e6e9ee"/><circle cx="5.5" cy="1.5" r="0.7" fill="#e6e9ee"/></svg></header>
<h3 class="tx" style="top:19px;font-size:5.65px;left:14.4px;font-weight:700;color:#f1f3f6">Available Updates</h3>
<svg class="abs" style="left:18.6px;top:34.6px" width="6.4" height="6.4" viewBox="0 0 6.4 6.4"><circle cx="3.200" cy="3.200" r="2.500" fill="none" stroke="#c2583d" stroke-width=".7"/><path d="M3.200 1.900v1.500h1" fill="none" stroke="#c2583d" stroke-width=".6"/></svg>
<div class="tx" style="top:36px;font-size:5.85px;left:29.7px;font-weight:700;color:#f1f3f6">A new Nagios XI update is available.</div>
<div class="tx" style="top:48px;font-size:5.8px;left:18.6px;color:#6f7a8c">2024R2.1 was released on August 12th, 2025.</div>
<div class="tx" style="top:60px;font-size:5.9px;left:18.6px;color:#6f7a8c">Visit <span style="color:#4f7df0">www.nagios.com</span> to obtain the latest update.</div>
<div class="tx" style="top:76px;font-size:5.9px;left:18.6px;color:#dfe3e9">Latest Available Version:</div><div class="tx" style="top:76px;font-size:5.95px;left:89px;color:#dfe3e9">2024R2.1</div>
<div class="tx" style="top:88px;font-size:5.9px;left:18.6px;color:#dfe3e9">Installed Version:</div><div class="tx" style="top:88px;font-size:5.95px;left:89px;color:#dfe3e9">2024R2</div>
<div class="tx" style="top:100px;font-size:5.9px;left:18.6px;color:#dfe3e9">Last Update Check:</div><div class="tx" style="top:100px;font-size:5.95px;left:89px;color:#dfe3e9">2025-08-28 15:08:14</div>
</section>
<section class="panel" style="left:758px;top:424px;width:223px;height:109px"><header class="ph"><h2 class="tx" style="font-weight:400;top:3px;font-size:6.3px;left:4.7px;color:#e9ecf1">Current Users</h2><svg class="abs" style="left:211.4px;top:4.1px" width="7" height="3" viewBox="0 0 7 3"><circle cx="1.5" cy="1.5" r="0.7" fill="#e6e9ee"/><circle cx="3.5" cy="1.5" r="0.7" fill="#e6e9ee"/><circle cx="5.5" cy="1.5" r="0.7" fill="#e6e9ee"/></svg></header><svg class="abs" style="left:0px;top:0px" width="223" height="109" viewBox="758 424 223 109"><path d="M837.76 527.2A50 50 0 0 1 846.12 444.92L857.53 466.03A26 26 0 0 0 853.19 508.82Z" fill="#1a3f1e"/><path d="M846.12 444.92A50 50 0 0 1 902.04 527.2L886.61 508.82A26 26 0 0 0 857.53 466.03Z" fill="#584214"/><text x="869.9" y="492" text-anchor="middle" font-size="12" font-weight="700" fill="#fff">0</text><text x="869.9" y="500" text-anchor="middle" font-size="5.300" fill="#c5cad3">users / 50</text></svg></section>
<svg class="abs" style="left:0px;top:526px" width="83" height="8" viewBox="0 0 83 8"><path d="M0 0h81.500a1.500 1.500 0 0 1 1.500 1.500V8H0z" fill="#1b1f27"/></svg>
<div class="tx" style="top:528px;font-size:5.05px;left:2.5px;color:#fff">192.168.1.24/nagiosxi/dashboards/</div>
</div></body></html>
